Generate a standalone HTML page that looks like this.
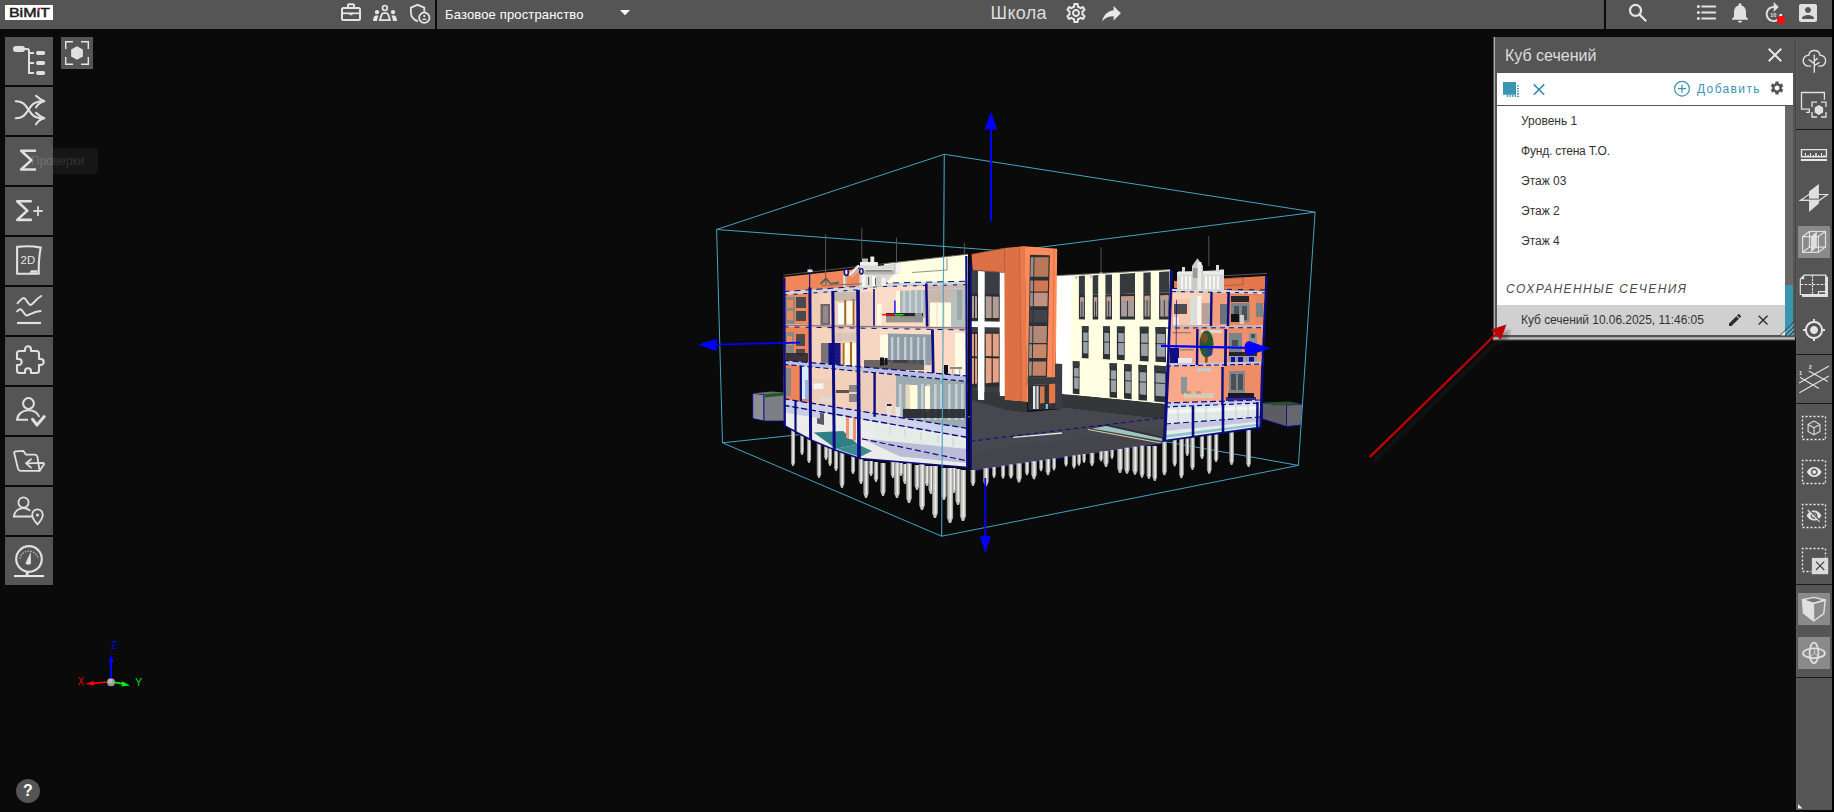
<!DOCTYPE html>
<html lang="ru">
<head>
<meta charset="utf-8">
<title>BIMIT</title>
<style>
html,body{margin:0;padding:0;}
body{width:1834px;height:812px;overflow:hidden;background:#0a0a0a;position:relative;font-family:"Liberation Sans",sans-serif;color:#ddd;}
.abs{position:absolute;}
svg{position:absolute;overflow:visible;}
#topbar{position:absolute;left:0;top:0;width:1832px;height:29px;background:#555;}
#logo{position:absolute;left:5px;top:5px;width:48px;height:15px;background:#fff;color:#111;font-weight:bold;font-size:13px;line-height:15px;text-align:center;letter-spacing:0px;}
.vdiv{position:absolute;top:0;height:29px;background:#0a0a0a;}
.t{position:absolute;white-space:nowrap;line-height:1;}
.sb{position:absolute;left:5px;width:48px;height:48px;background:#555;}
#rail{position:absolute;left:1796px;top:37px;width:36px;height:773px;background:#555;box-shadow:inset 1px 0 0 #5c5c5c;}
.rdiv{position:absolute;left:0;width:36px;height:1px;background:#1a1a1a;}
.ract{position:absolute;left:2px;width:32px;height:32px;background:#8a8a8a;}
#panel{position:absolute;left:1495px;top:37px;width:300px;height:300px;background:#555;box-shadow:-1px 0 0 0 #b4b4b4,-2px 0 0 0 #505050;}
#ptool{position:absolute;left:2px;top:36px;width:296px;height:32px;background:#fff;}
#plist{position:absolute;left:2px;top:69px;width:288px;height:229px;background:#fff;}
#pscroll{position:absolute;left:290px;top:69px;width:8px;height:229px;background:#696969;}
#pthumb{position:absolute;left:290px;top:248px;width:8px;height:50px;background:#3a95b3;}
.li{position:absolute;left:24px;font-size:12px;color:#333;white-space:nowrap;line-height:1;}
#selrow{position:absolute;left:0;top:199px;width:288px;height:30px;background:#d0d0d0;}
</style>
</head>
<body>
<!-- viewport scene placeholder -->
<svg id="scene" style="left:0;top:0" width="1834" height="812" viewBox="0 0 1834 812">
<line x1="716.6" y1="229.5" x2="1009" y2="251.3" stroke="#46a2c4" stroke-width="1"/>
<line x1="1315.1" y1="212.2" x2="1009" y2="251.3" stroke="#46a2c4" stroke-width="1"/>
<line x1="722.5" y1="442.8" x2="1005" y2="413" stroke="#46a2c4" stroke-width="1"/>
<line x1="1298.4" y1="465.4" x2="1005" y2="413" stroke="#46a2c4" stroke-width="1"/>
<line x1="1009" y1="251.3" x2="1005" y2="413" stroke="#46a2c4" stroke-width="1"/>
<polygon points="1056,276 1170,269.8 1170,404.6 1056,393.4" fill="#fffde2"/>
<polygon points="1057,276 1071.6,275.2 1070.4,395.2 1055.4,394.4" fill="#ffffff"/>
<line x1="1057" y1="275.6" x2="1170" y2="269.6" stroke="#8a8a8a" stroke-width="0.8"/>
<rect x="1075" y="276" width="2.5" height="3" fill="#c8c8c8"/>
<rect x="1081" y="275.6" width="3.5" height="3" fill="#c8c8c8"/>
<rect x="1090" y="275.2" width="2" height="3" fill="#c8c8c8"/>
<rect x="1096" y="274.8" width="2.5" height="3" fill="#c8c8c8"/>
<polygon points="1078.9,276.1 1084.9,275.8 1084.9,295 1078.9,295.1" fill="#363a3e"/>
<polygon points="1078.9,295.1 1084.9,295 1084.9,319.4 1078.9,319.3" fill="#2c2f33"/>
<polygon points="1080.1,298.2 1083.9,298.1 1083.9,316.6 1080.1,316.7" fill="#a89a98"/>
<polygon points="1080.1,297.3 1083.9,297.2 1083.9,301.3 1080.1,301.4" fill="#c49a88"/>
<line x1="1081.9" y1="301.8" x2="1081.9" y2="316.6" stroke="#2c2f33" stroke-width="0.9"/>
<polygon points="1092.7,275.4 1098.2,275.1 1098.2,294.6 1092.7,294.7" fill="#363a3e"/>
<polygon points="1092.7,294.7 1098.2,294.6 1098.2,319.4 1092.7,319.4" fill="#2c2f33"/>
<polygon points="1093.9,297.9 1097.2,297.8 1097.2,316.6 1093.9,316.6" fill="#a89a98"/>
<polygon points="1093.9,297 1097.2,296.9 1097.2,301 1093.9,301.1" fill="#c49a88"/>
<line x1="1095.5" y1="301.5" x2="1095.5" y2="316.6" stroke="#2c2f33" stroke-width="0.9"/>
<polygon points="1105.4,274.7 1112,274.4 1112,294.2 1105.4,294.4" fill="#363a3e"/>
<polygon points="1105.4,294.4 1112,294.2 1112,319.4 1105.4,319.4" fill="#2c2f33"/>
<polygon points="1106.6,297.6 1111,297.5 1111,316.6 1106.6,316.6" fill="#a89a98"/>
<polygon points="1106.6,296.6 1111,296.5 1111,300.7 1106.6,300.8" fill="#c49a88"/>
<line x1="1108.7" y1="301.2" x2="1108.7" y2="316.6" stroke="#2c2f33" stroke-width="0.9"/>
<polygon points="1119.9,273.9 1135,273.1 1135,293.5 1119.9,293.9" fill="#363a3e"/>
<polygon points="1119.9,293.9 1135,293.5 1135,319.4 1119.9,319.4" fill="#2c2f33"/>
<polygon points="1121.1,297.2 1134,296.9 1134,316.6 1121.1,316.6" fill="#a89a98"/>
<polygon points="1121.1,296.3 1134,295.9 1134,300.3 1121.1,300.5" fill="#c49a88"/>
<line x1="1127.5" y1="300.9" x2="1127.5" y2="316.6" stroke="#2c2f33" stroke-width="0.9"/>
<polygon points="1143.4,272.7 1150.7,272.3 1150.7,293.1 1143.4,293.3" fill="#363a3e"/>
<polygon points="1143.4,293.3 1150.7,293.1 1150.7,319.5 1143.4,319.5" fill="#2c2f33"/>
<polygon points="1144.6,296.6 1149.7,296.5 1149.7,316.5 1144.6,316.5" fill="#a89a98"/>
<polygon points="1144.6,295.7 1149.7,295.5 1149.7,299.9 1144.6,300" fill="#c49a88"/>
<line x1="1147.1" y1="300.5" x2="1147.1" y2="316.5" stroke="#2c2f33" stroke-width="0.9"/>
<polygon points="1159.1,271.9 1169.5,271.3 1169.5,292.5 1159.1,292.8" fill="#363a3e"/>
<polygon points="1159.1,292.8 1169.5,292.5 1169.5,319.5 1159.1,319.5" fill="#2c2f33"/>
<polygon points="1160.3,296.2 1168.5,296 1168.5,316.5 1160.3,316.5" fill="#a89a98"/>
<polygon points="1160.3,295.3 1168.5,295 1168.5,299.5 1160.3,299.7" fill="#c49a88"/>
<line x1="1164.3" y1="300.1" x2="1164.3" y2="316.5" stroke="#2c2f33" stroke-width="0.9"/>
<polygon points="1081.9,326.1 1088.5,326.2 1088.5,358.4 1081.9,358.1" fill="#2c2f33"/>
<polygon points="1083.2,332.4 1087.7,332.5 1087.7,353.4 1083.2,353.2" fill="#9aa2a6"/>
<polygon points="1081.9,326.1 1088.5,326.2 1088.5,330.7 1081.9,330.6" fill="#363a3e"/>
<line x1="1081.9" y1="341.4" x2="1088.5" y2="341.6" stroke="#2c2f33" stroke-width="1"/>
<polygon points="1103,326.3 1110,326.4 1110,359.5 1103,359.1" fill="#2c2f33"/>
<polygon points="1104.3,332.8 1109.2,332.9 1109.2,354.3 1104.3,354.1" fill="#9aa2a6"/>
<polygon points="1103,326.3 1110,326.4 1110,331.1 1103,330.9" fill="#363a3e"/>
<line x1="1103" y1="342" x2="1110" y2="342.2" stroke="#2c2f33" stroke-width="1"/>
<polygon points="1116.9,326.5 1124.7,326.5 1124.7,360.2 1116.9,359.8" fill="#2c2f33"/>
<polygon points="1118.2,333.1 1123.9,333.2 1123.9,355 1118.2,354.7" fill="#9aa2a6"/>
<polygon points="1116.9,326.5 1124.7,326.5 1124.7,331.3 1116.9,331.2" fill="#363a3e"/>
<line x1="1116.9" y1="342.4" x2="1124.7" y2="342.7" stroke="#2c2f33" stroke-width="1"/>
<polygon points="1139.8,326.7 1148.6,326.8 1148.6,361.4 1139.8,361" fill="#2c2f33"/>
<polygon points="1141.1,333.5 1147.8,333.6 1147.8,356 1141.1,355.7" fill="#9aa2a6"/>
<polygon points="1139.8,326.7 1148.6,326.8 1148.6,331.7 1139.8,331.5" fill="#363a3e"/>
<line x1="1139.8" y1="343.1" x2="1148.6" y2="343.4" stroke="#2c2f33" stroke-width="1"/>
<polygon points="1155.5,326.9 1166,327 1166,362.3 1155.5,361.8" fill="#2c2f33"/>
<polygon points="1156.8,333.8 1165.2,333.9 1165.2,356.8 1156.8,356.4" fill="#9aa2a6"/>
<polygon points="1155.5,326.9 1166,327 1166,331.9 1155.5,331.8" fill="#363a3e"/>
<line x1="1155.5" y1="343.6" x2="1166" y2="343.9" stroke="#2c2f33" stroke-width="1"/>
<polygon points="1072.8,361.2 1079.5,361.5 1079.5,394.3 1072.8,393.7" fill="#2c2f33"/>
<polygon points="1074.1,367.9 1078.7,368.2 1078.7,388.9 1074.1,388.4" fill="#9aa2a6"/>
<polygon points="1072.8,361.2 1079.5,361.5 1079.5,366.5 1072.8,366.1" fill="#363a3e"/>
<line x1="1072.8" y1="376.8" x2="1079.5" y2="377.3" stroke="#2c2f33" stroke-width="1"/>
<polygon points="1109.6,363.2 1117,363.6 1117,397.9 1109.6,397.2" fill="#2c2f33"/>
<polygon points="1110.9,370.3 1116.2,370.6 1116.2,392.2 1110.9,391.7" fill="#9aa2a6"/>
<polygon points="1109.6,363.2 1117,363.6 1117,368.8 1109.6,368.3" fill="#363a3e"/>
<line x1="1109.6" y1="379.5" x2="1117" y2="380" stroke="#2c2f33" stroke-width="1"/>
<polygon points="1124,364 1131.6,364.4 1131.6,399.3 1124,398.6" fill="#2c2f33"/>
<polygon points="1125.3,371.2 1130.8,371.5 1130.8,393.5 1125.3,393" fill="#9aa2a6"/>
<polygon points="1124,364 1131.6,364.4 1131.6,369.7 1124,369.2" fill="#363a3e"/>
<line x1="1124" y1="380.6" x2="1131.6" y2="381.1" stroke="#2c2f33" stroke-width="1"/>
<polygon points="1138.5,364.8 1147,365.2 1147,400.8 1138.5,400" fill="#2c2f33"/>
<polygon points="1139.8,372.1 1146.2,372.5 1146.2,394.9 1139.8,394.3" fill="#9aa2a6"/>
<polygon points="1138.5,364.8 1147,365.2 1147,370.6 1138.5,370.1" fill="#363a3e"/>
<line x1="1138.5" y1="381.7" x2="1147" y2="382.3" stroke="#2c2f33" stroke-width="1"/>
<polygon points="1154.3,365.6 1166,366.3 1166,402.6 1154.3,401.5" fill="#2c2f33"/>
<polygon points="1155.6,373.1 1165.2,373.7 1165.2,396.6 1155.6,395.7" fill="#9aa2a6"/>
<polygon points="1154.3,365.6 1166,366.3 1166,371.8 1154.3,371" fill="#363a3e"/>
<line x1="1154.3" y1="382.8" x2="1166" y2="383.7" stroke="#2c2f33" stroke-width="1"/>
<polygon points="1062,394 1170,404.6 1170,419.5 1062,407.1" fill="#33373a"/>
<polygon points="970,270 1005,272 1005,401 970,399" fill="#3a3e44"/>
<polygon points="971,293.5 978,293.7 978,320.5 971,320.5" fill="#2a2c30"/>
<polygon points="972,296 977,296.2 977,318 972,318" fill="#b39c94"/>
<line x1="974.5" y1="296" x2="974.5" y2="318" stroke="#2a2c30" stroke-width="1"/>
<polygon points="971,332 978,331.9 978,387.6 971,388" fill="#2a2c30"/>
<polygon points="972,334 977,333.9 977,383.6 972,384" fill="#e6a384"/>
<line x1="974.5" y1="334" x2="974.5" y2="385" stroke="#2a2c30" stroke-width="1.2"/>
<line x1="971" y1="357" x2="978" y2="357.5" stroke="#2a2c30" stroke-width="2.2"/>
<polygon points="984.7,293.9 999.8,294.3 999.8,320.5 984.7,320.5" fill="#2a2c30"/>
<polygon points="985.7,296.3 998.8,296.7 998.8,318.1 985.7,318.1" fill="#b39c94"/>
<line x1="992.2" y1="296" x2="992.2" y2="318" stroke="#2a2c30" stroke-width="1"/>
<polygon points="984.7,331.9 999.8,331.7 999.8,386.2 984.7,387.1" fill="#2a2c30"/>
<polygon points="985.7,333.8 998.8,333.7 998.8,382.3 985.7,383.2" fill="#e6a384"/>
<line x1="992.2" y1="334" x2="992.2" y2="385" stroke="#2a2c30" stroke-width="1.2"/>
<line x1="984.7" y1="357" x2="999.8" y2="357.5" stroke="#2a2c30" stroke-width="2.2"/>
<polygon points="978.1,271 984.7,271.3 984.4,401 977.8,400.6" fill="#ffffff"/>
<polygon points="999.8,272 1005,272.2 1005,396 999.6,396" fill="#ffffff"/>
<polygon points="971,321.2 1005,321.8 1005,327.6 971,327" fill="#ffffff"/>
<polygon points="970,390 978,390.4 978,400.8 970,400" fill="#33373a"/>
<polygon points="984.5,392 999.8,392.6 999.8,402 984.5,401" fill="#33373a"/>
<polygon points="970,399.5 1005.5,401 1005.5,410 970,401.5" fill="#33373a"/>
<polygon points="971.5,254.2 1004.3,248.1 1004.6,272.6 972.6,270" fill="#dd7044"/>
<line x1="972" y1="254.2" x2="1004" y2="248.3" stroke="#7a4a38" stroke-width="0.7"/>
<line x1="973" y1="270" x2="1004.6" y2="272.6" stroke="#8a5a48" stroke-width="0.7"/>
<polygon points="1004.3,248 1024.6,246.3 1027,402 1004.8,400.2" fill="#de7144"/>
<polygon points="1019.5,246.8 1024.6,246.3 1027,402 1021.5,401.5" fill="#e97a4b"/>
<line x1="1019.5" y1="246.8" x2="1021.5" y2="401.5" stroke="#a85a38" stroke-width="0.6"/>
<polygon points="1024.6,246.3 1057.2,248.7 1055.3,403 1027,402" fill="#ff8b5b"/>
<line x1="1054" y1="249" x2="1052.3" y2="403" stroke="#c8683f" stroke-width="0.7"/>
<polygon points="1030,254.7 1049.9,255.2 1046.9,377.5 1028,377.5" fill="#2e3036"/>
<polygon points="1034.6,257.2 1048.6,257.2 1048.2,276.8 1034.2,276.8" fill="#b8785c"/>
<polygon points="1030.8,257.2 1033.6,257.2 1033.2,276.8 1030.4,276.8" fill="#9a8f8a"/>
<polygon points="1034.2,280.5 1048.1,280.5 1047.8,291.5 1034,291.5" fill="#d07850"/>
<polygon points="1030.4,280.5 1033.2,280.5 1033,291.5 1030.2,291.5" fill="#9a8f8a"/>
<polygon points="1034,292.8 1047.8,292.8 1047.4,306.3 1033.8,306.3" fill="#c3917f"/>
<polygon points="1030.2,292.8 1033,292.8 1032.8,306.3 1030,306.3" fill="#9a8f8a"/>
<polygon points="1033.7,310 1047.4,310 1047,322.2 1033.5,322.2" fill="#40434b"/>
<polygon points="1029.9,310 1032.7,310 1032.5,322.2 1029.7,322.2" fill="#40434b"/>
<polygon points="1033.4,325.9 1047,325.9 1046.5,343.1 1033.2,343.1" fill="#b28878"/>
<polygon points="1029.6,325.9 1032.4,325.9 1032.2,343.1 1029.4,343.1" fill="#9a8f8a"/>
<polygon points="1033.1,344.3 1046.5,344.3 1046.2,357.9 1032.9,357.9" fill="#c98868"/>
<polygon points="1029.3,344.3 1032.1,344.3 1031.9,357.9 1029.1,357.9" fill="#9a8f8a"/>
<polygon points="1032.9,361.5 1046.1,361.5 1045.7,375.7 1032.6,375.7" fill="#c08468"/>
<polygon points="1029.1,361.5 1031.9,361.5 1031.6,375.7 1028.8,375.7" fill="#9a8f8a"/>
<polygon points="1055,363.5 1062.2,364 1062,409 1055,409" fill="#3a3d43"/>
<polygon points="1027.6,377.3 1060.2,377.3 1060.2,383.5 1027.6,385.2" fill="#383c40"/>
<polygon points="1028,385.2 1055.2,383.8 1055.2,409 1028,410.5" fill="#2f3236"/>
<rect x="1033" y="386" width="2.4" height="23" fill="#e8e8e8"/>
<rect x="1036.4" y="386" width="2.2" height="23" fill="#d0d0d0"/>
<polygon points="1040,386.5 1044.5,386.3 1044.5,403 1040,403.5" fill="#d07a52"/>
<rect x="1045.8" y="404" width="2" height="5" fill="#8fd0d8"/>
<polygon points="1004.8,400.2 1027,402 1027.4,412 1005,409.6" fill="#33373a"/>
<polygon points="1049,384 1055.2,383.8 1055.2,403 1049,403.5" fill="#e27648"/>
<polygon points="970,399.5 1005,409.6 1027.4,412 1062,409 1062,407.1 1166,419 1164,443.5 970,471.5" fill="#47474f"/>
<polygon points="970,452 1164,428 1164,443.5 970,471.5" fill="#44444c"/>
<polygon points="1091,428 1108,424.6 1163,437 1163,441.5" fill="#2e3034"/>
<polygon points="1092,428.5 1106,426 1162,438.6 1162,441" fill="#9cc4c4"/>
<line x1="1088" y1="429.5" x2="1161" y2="443" stroke="#d8cc9a" stroke-width="1.2"/>
<line x1="1013" y1="437.3" x2="1062" y2="433" stroke="#e4e4e4" stroke-width="1.3"/>
<line x1="970" y1="441.3" x2="1163" y2="417.8" stroke="#0c0c82" stroke-width="1" stroke-dasharray="5 3"/>
<line x1="970" y1="471.5" x2="1164" y2="443.5" stroke="#0c0c82" stroke-width="1.2"/>
<polygon points="800.2,425 803.8,425 803.8,451.7 802.7,455 801.3,455 800.2,451.7" fill="#c4c4be"/>
<line x1="800.5" y1="425" x2="800.5" y2="451.7" stroke="#77777a" stroke-width="0.8"/>
<line x1="803.5" y1="425" x2="803.5" y2="451.7" stroke="#8e8e90" stroke-width="0.7"/>
<line x1="802.3" y1="425" x2="802.3" y2="452.4" stroke="#ecece8" stroke-width="1.1"/>
<polygon points="824.1,443 827.9,443 827.9,456.5 826.7,460 825.3,460 824.1,456.5" fill="#c4c4be"/>
<line x1="824.4" y1="443" x2="824.4" y2="456.5" stroke="#77777a" stroke-width="0.8"/>
<line x1="827.6" y1="443" x2="827.6" y2="456.5" stroke="#8e8e90" stroke-width="0.7"/>
<line x1="826.3" y1="443" x2="826.3" y2="457.3" stroke="#ecece8" stroke-width="1.2"/>
<polygon points="807,427 811,427 811,459.4 809.7,463 808.3,463 807,459.4" fill="#c4c4be"/>
<line x1="807.4" y1="427" x2="807.4" y2="459.4" stroke="#77777a" stroke-width="0.8"/>
<line x1="810.6" y1="427" x2="810.6" y2="459.4" stroke="#8e8e90" stroke-width="0.7"/>
<line x1="809.3" y1="427" x2="809.3" y2="460.2" stroke="#ecece8" stroke-width="1.2"/>
<polygon points="791,424 795,424 795,462.4 793.7,466 792.3,466 791,462.4" fill="#c4c4be"/>
<line x1="791.4" y1="424" x2="791.4" y2="462.4" stroke="#77777a" stroke-width="0.8"/>
<line x1="794.6" y1="424" x2="794.6" y2="462.4" stroke="#8e8e90" stroke-width="0.7"/>
<line x1="793.3" y1="424" x2="793.3" y2="463.2" stroke="#ecece8" stroke-width="1.2"/>
<polygon points="828.1,447 831.9,447 831.9,462.5 830.7,466 829.3,466 828.1,462.5" fill="#c4c4be"/>
<line x1="828.4" y1="447" x2="828.4" y2="462.5" stroke="#77777a" stroke-width="0.8"/>
<line x1="831.6" y1="447" x2="831.6" y2="462.5" stroke="#8e8e90" stroke-width="0.7"/>
<line x1="830.3" y1="447" x2="830.3" y2="463.3" stroke="#ecece8" stroke-width="1.2"/>
<polygon points="834,450 838,450 838,467.4 836.7,471 835.3,471 834,467.4" fill="#c4c4be"/>
<line x1="834.4" y1="450" x2="834.4" y2="467.4" stroke="#77777a" stroke-width="0.8"/>
<line x1="837.6" y1="450" x2="837.6" y2="467.4" stroke="#8e8e90" stroke-width="0.7"/>
<line x1="836.3" y1="450" x2="836.3" y2="468.2" stroke="#ecece8" stroke-width="1.2"/>
<polygon points="851,456 855,456 855,470.4 853.7,474 852.3,474 851,470.4" fill="#c4c4be"/>
<line x1="851.4" y1="456" x2="851.4" y2="470.4" stroke="#77777a" stroke-width="0.8"/>
<line x1="854.6" y1="456" x2="854.6" y2="470.4" stroke="#8e8e90" stroke-width="0.7"/>
<line x1="853.3" y1="456" x2="853.3" y2="471.2" stroke="#ecece8" stroke-width="1.2"/>
<polygon points="869,461 873,461 873,472.4 871.7,476 870.3,476 869,472.4" fill="#c4c4be"/>
<line x1="869.4" y1="461" x2="869.4" y2="472.4" stroke="#77777a" stroke-width="0.8"/>
<line x1="872.6" y1="461" x2="872.6" y2="472.4" stroke="#8e8e90" stroke-width="0.7"/>
<line x1="871.3" y1="461" x2="871.3" y2="473.2" stroke="#ecece8" stroke-width="1.2"/>
<polygon points="899,463 903,463 903,472.4 901.7,476 900.3,476 899,472.4" fill="#c4c4be"/>
<line x1="899.4" y1="463" x2="899.4" y2="472.4" stroke="#77777a" stroke-width="0.8"/>
<line x1="902.6" y1="463" x2="902.6" y2="472.4" stroke="#8e8e90" stroke-width="0.7"/>
<line x1="901.3" y1="463" x2="901.3" y2="473.2" stroke="#ecece8" stroke-width="1.2"/>
<polygon points="816.9,442 821.1,442 821.1,474.3 819.7,478 818.3,478 816.9,474.3" fill="#c4c4be"/>
<line x1="817.3" y1="442" x2="817.3" y2="474.3" stroke="#77777a" stroke-width="0.8"/>
<line x1="820.7" y1="442" x2="820.7" y2="474.3" stroke="#8e8e90" stroke-width="0.7"/>
<line x1="819.3" y1="442" x2="819.3" y2="475.1" stroke="#ecece8" stroke-width="1.2"/>
<polygon points="890.8,458 895.2,458 895.2,474.1 893.8,478 892.2,478 890.8,474.1" fill="#c4c4be"/>
<line x1="891.2" y1="458" x2="891.2" y2="474.1" stroke="#77777a" stroke-width="0.8"/>
<line x1="894.8" y1="458" x2="894.8" y2="474.1" stroke="#8e8e90" stroke-width="0.7"/>
<line x1="893.3" y1="458" x2="893.3" y2="475" stroke="#ecece8" stroke-width="1.3"/>
<polygon points="873.9,462 878.1,462 878.1,478.3 876.7,482 875.3,482 873.9,478.3" fill="#c4c4be"/>
<line x1="874.3" y1="462" x2="874.3" y2="478.3" stroke="#77777a" stroke-width="0.8"/>
<line x1="877.7" y1="462" x2="877.7" y2="478.3" stroke="#8e8e90" stroke-width="0.7"/>
<line x1="876.3" y1="462" x2="876.3" y2="479.1" stroke="#ecece8" stroke-width="1.2"/>
<polygon points="858.8,459 863.2,459 863.2,480.1 861.8,484 860.2,484 858.8,480.1" fill="#c4c4be"/>
<line x1="859.2" y1="459" x2="859.2" y2="480.1" stroke="#77777a" stroke-width="0.8"/>
<line x1="862.8" y1="459" x2="862.8" y2="480.1" stroke="#8e8e90" stroke-width="0.7"/>
<line x1="861.3" y1="459" x2="861.3" y2="481" stroke="#ecece8" stroke-width="1.3"/>
<polygon points="902.8,464 907.2,464 907.2,480.1 905.8,484 904.2,484 902.8,480.1" fill="#c4c4be"/>
<line x1="903.2" y1="464" x2="903.2" y2="480.1" stroke="#77777a" stroke-width="0.8"/>
<line x1="906.8" y1="464" x2="906.8" y2="480.1" stroke="#8e8e90" stroke-width="0.7"/>
<line x1="905.3" y1="464" x2="905.3" y2="481" stroke="#ecece8" stroke-width="1.3"/>
<polygon points="924.8,466 929.2,466 929.2,482.1 927.8,486 926.2,486 924.8,482.1" fill="#c4c4be"/>
<line x1="925.2" y1="466" x2="925.2" y2="482.1" stroke="#77777a" stroke-width="0.8"/>
<line x1="928.8" y1="466" x2="928.8" y2="482.1" stroke="#8e8e90" stroke-width="0.7"/>
<line x1="927.3" y1="466" x2="927.3" y2="483" stroke="#ecece8" stroke-width="1.3"/>
<polygon points="839.8,451 844.2,451 844.2,484 842.8,488 841.2,488 839.8,484" fill="#c4c4be"/>
<line x1="840.1" y1="451" x2="840.1" y2="484" stroke="#77777a" stroke-width="0.8"/>
<line x1="843.9" y1="451" x2="843.9" y2="484" stroke="#8e8e90" stroke-width="0.7"/>
<line x1="842.4" y1="451" x2="842.4" y2="484.9" stroke="#ecece8" stroke-width="1.3"/>
<polygon points="914.7,465 919.3,465 919.3,485.8 917.8,490 916.2,490 914.7,485.8" fill="#c4c4be"/>
<line x1="915" y1="465" x2="915" y2="485.8" stroke="#77777a" stroke-width="0.8"/>
<line x1="919" y1="465" x2="919" y2="485.8" stroke="#8e8e90" stroke-width="0.7"/>
<line x1="917.4" y1="465" x2="917.4" y2="486.8" stroke="#ecece8" stroke-width="1.4"/>
<polygon points="951.8,468 956.2,468 956.2,489 954.8,493 953.2,493 951.8,489" fill="#c4c4be"/>
<line x1="952.1" y1="468" x2="952.1" y2="489" stroke="#77777a" stroke-width="0.8"/>
<line x1="955.9" y1="468" x2="955.9" y2="489" stroke="#8e8e90" stroke-width="0.7"/>
<line x1="954.4" y1="468" x2="954.4" y2="489.9" stroke="#ecece8" stroke-width="1.3"/>
<polygon points="928.6,466 933.4,466 933.4,489.7 931.9,494 930.1,494 928.6,489.7" fill="#c4c4be"/>
<line x1="929" y1="466" x2="929" y2="489.7" stroke="#77777a" stroke-width="0.8"/>
<line x1="933" y1="466" x2="933" y2="489.7" stroke="#8e8e90" stroke-width="0.7"/>
<line x1="931.4" y1="466" x2="931.4" y2="490.6" stroke="#ecece8" stroke-width="1.4"/>
<polygon points="880.6,463 885.4,463 885.4,491.7 883.9,496 882.1,496 880.6,491.7" fill="#c4c4be"/>
<line x1="881" y1="463" x2="881" y2="491.7" stroke="#77777a" stroke-width="0.8"/>
<line x1="885" y1="463" x2="885" y2="491.7" stroke="#8e8e90" stroke-width="0.7"/>
<line x1="883.4" y1="463" x2="883.4" y2="492.6" stroke="#ecece8" stroke-width="1.4"/>
<polygon points="863.6,461 868.4,461 868.4,493.7 866.9,498 865.1,498 863.6,493.7" fill="#c4c4be"/>
<line x1="864" y1="461" x2="864" y2="493.7" stroke="#77777a" stroke-width="0.8"/>
<line x1="868" y1="461" x2="868" y2="493.7" stroke="#8e8e90" stroke-width="0.7"/>
<line x1="866.4" y1="461" x2="866.4" y2="494.6" stroke="#ecece8" stroke-width="1.4"/>
<polygon points="894.4,452 899.6,452 899.6,493.4 897.9,498 896.1,498 894.4,493.4" fill="#c4c4be"/>
<line x1="894.8" y1="452" x2="894.8" y2="493.4" stroke="#77777a" stroke-width="0.8"/>
<line x1="899.2" y1="452" x2="899.2" y2="493.4" stroke="#8e8e90" stroke-width="0.7"/>
<line x1="897.4" y1="452" x2="897.4" y2="494.4" stroke="#ecece8" stroke-width="1.5"/>
<polygon points="941.6,468 946.4,468 946.4,495.7 944.9,500 943.1,500 941.6,495.7" fill="#c4c4be"/>
<line x1="942" y1="468" x2="942" y2="495.7" stroke="#77777a" stroke-width="0.8"/>
<line x1="946" y1="468" x2="946" y2="495.7" stroke="#8e8e90" stroke-width="0.7"/>
<line x1="944.4" y1="468" x2="944.4" y2="496.6" stroke="#ecece8" stroke-width="1.4"/>
<polygon points="906.4,461 911.6,461 911.6,498.2 910,503 908,503 906.4,498.2" fill="#c4c4be"/>
<line x1="906.7" y1="461" x2="906.7" y2="498.2" stroke="#77777a" stroke-width="0.8"/>
<line x1="911.3" y1="461" x2="911.3" y2="498.2" stroke="#8e8e90" stroke-width="0.7"/>
<line x1="909.4" y1="461" x2="909.4" y2="499.3" stroke="#ecece8" stroke-width="1.6"/>
<polygon points="955.5,469 960.5,469 960.5,500.5 958.9,505 957.1,505 955.5,500.5" fill="#c4c4be"/>
<line x1="955.9" y1="469" x2="955.9" y2="500.5" stroke="#77777a" stroke-width="0.8"/>
<line x1="960.1" y1="469" x2="960.1" y2="500.5" stroke="#8e8e90" stroke-width="0.7"/>
<line x1="958.4" y1="469" x2="958.4" y2="501.5" stroke="#ecece8" stroke-width="1.5"/>
<polygon points="919.2,464 924.8,464 924.8,505 923,510 921,510 919.2,505" fill="#c4c4be"/>
<line x1="919.6" y1="464" x2="919.6" y2="505" stroke="#77777a" stroke-width="0.8"/>
<line x1="924.4" y1="464" x2="924.4" y2="505" stroke="#8e8e90" stroke-width="0.7"/>
<line x1="922.4" y1="464" x2="922.4" y2="506.1" stroke="#ecece8" stroke-width="1.7"/>
<polygon points="932.1,466 937.9,466 937.9,512.8 936,518 934,518 932.1,512.8" fill="#c4c4be"/>
<line x1="932.5" y1="466" x2="932.5" y2="512.8" stroke="#77777a" stroke-width="0.8"/>
<line x1="937.5" y1="466" x2="937.5" y2="512.8" stroke="#8e8e90" stroke-width="0.7"/>
<line x1="935.5" y1="466" x2="935.5" y2="514" stroke="#ecece8" stroke-width="1.7"/>
<polygon points="960,470 966,470 966,515.7 964.1,521 961.9,521 960,515.7" fill="#c4c4be"/>
<line x1="960.4" y1="470" x2="960.4" y2="515.7" stroke="#77777a" stroke-width="0.8"/>
<line x1="965.6" y1="470" x2="965.6" y2="515.7" stroke="#8e8e90" stroke-width="0.7"/>
<line x1="963.5" y1="470" x2="963.5" y2="516.9" stroke="#ecece8" stroke-width="1.8"/>
<polygon points="947,468 953,468 953,517.5 951.1,523 948.9,523 947,517.5" fill="#c4c4be"/>
<line x1="947.3" y1="468" x2="947.3" y2="517.5" stroke="#77777a" stroke-width="0.8"/>
<line x1="952.7" y1="468" x2="952.7" y2="517.5" stroke="#8e8e90" stroke-width="0.7"/>
<line x1="950.5" y1="468" x2="950.5" y2="518.7" stroke="#ecece8" stroke-width="1.8"/>
<polygon points="970.8,470.1 975.2,470.1 975.2,482.1 973.8,486.1 972.2,486.1 970.8,482.1" fill="#c4c4be"/>
<line x1="971.1" y1="470.1" x2="971.1" y2="482.1" stroke="#77777a" stroke-width="0.8"/>
<line x1="974.9" y1="470.1" x2="974.9" y2="482.1" stroke="#8e8e90" stroke-width="0.7"/>
<line x1="973.4" y1="470.1" x2="973.4" y2="483" stroke="#ecece8" stroke-width="1.3"/>
<polygon points="983.4,468.2 988.6,468.2 988.6,481.5 986.9,486.2 985.1,486.2 983.4,481.5" fill="#c4c4be"/>
<line x1="983.8" y1="468.2" x2="983.8" y2="481.5" stroke="#77777a" stroke-width="0.8"/>
<line x1="988.2" y1="468.2" x2="988.2" y2="481.5" stroke="#8e8e90" stroke-width="0.7"/>
<line x1="986.4" y1="468.2" x2="986.4" y2="482.6" stroke="#ecece8" stroke-width="1.6"/>
<polygon points="992.2,467 995.8,467 995.8,474.8 994.6,478 993.4,478 992.2,474.8" fill="#c4c4be"/>
<line x1="992.6" y1="467" x2="992.6" y2="474.8" stroke="#77777a" stroke-width="0.8"/>
<line x1="995.4" y1="467" x2="995.4" y2="474.8" stroke="#8e8e90" stroke-width="0.7"/>
<line x1="994.3" y1="467" x2="994.3" y2="475.5" stroke="#ecece8" stroke-width="1.1"/>
<polygon points="1001,465.7 1005,465.7 1005,475.1 1003.7,478.7 1002.3,478.7 1001,475.1" fill="#c4c4be"/>
<line x1="1001.4" y1="465.7" x2="1001.4" y2="475.1" stroke="#77777a" stroke-width="0.8"/>
<line x1="1004.6" y1="465.7" x2="1004.6" y2="475.1" stroke="#8e8e90" stroke-width="0.7"/>
<line x1="1003.3" y1="465.7" x2="1003.3" y2="475.9" stroke="#ecece8" stroke-width="1.2"/>
<polygon points="1008.8,464.6 1013.2,464.6 1013.2,474.7 1011.8,478.6 1010.2,478.6 1008.8,474.7" fill="#c4c4be"/>
<line x1="1009.2" y1="464.6" x2="1009.2" y2="474.7" stroke="#77777a" stroke-width="0.8"/>
<line x1="1012.8" y1="464.6" x2="1012.8" y2="474.7" stroke="#8e8e90" stroke-width="0.7"/>
<line x1="1011.3" y1="464.6" x2="1011.3" y2="475.6" stroke="#ecece8" stroke-width="1.3"/>
<polygon points="1016.4,463.4 1021.6,463.4 1021.6,477.7 1020,482.4 1018,482.4 1016.4,477.7" fill="#c4c4be"/>
<line x1="1016.7" y1="463.4" x2="1016.7" y2="477.7" stroke="#77777a" stroke-width="0.8"/>
<line x1="1021.3" y1="463.4" x2="1021.3" y2="477.7" stroke="#8e8e90" stroke-width="0.7"/>
<line x1="1019.4" y1="463.4" x2="1019.4" y2="478.7" stroke="#ecece8" stroke-width="1.6"/>
<polygon points="1025,462.3 1029,462.3 1029,471.7 1027.7,475.3 1026.3,475.3 1025,471.7" fill="#c4c4be"/>
<line x1="1025.3" y1="462.3" x2="1025.3" y2="471.7" stroke="#77777a" stroke-width="0.8"/>
<line x1="1028.7" y1="462.3" x2="1028.7" y2="471.7" stroke="#8e8e90" stroke-width="0.7"/>
<line x1="1027.3" y1="462.3" x2="1027.3" y2="472.5" stroke="#ecece8" stroke-width="1.2"/>
<polygon points="1031.4,461.3 1036.6,461.3 1036.6,474.7 1034.9,479.3 1033.1,479.3 1031.4,474.7" fill="#c4c4be"/>
<line x1="1031.8" y1="461.3" x2="1031.8" y2="474.7" stroke="#77777a" stroke-width="0.8"/>
<line x1="1036.2" y1="461.3" x2="1036.2" y2="474.7" stroke="#8e8e90" stroke-width="0.7"/>
<line x1="1034.4" y1="461.3" x2="1034.4" y2="475.7" stroke="#ecece8" stroke-width="1.5"/>
<polygon points="1039.2,460.3 1042.8,460.3 1042.8,467.9 1041.7,471.3 1040.3,471.3 1039.2,467.9" fill="#c4c4be"/>
<line x1="1039.5" y1="460.3" x2="1039.5" y2="467.9" stroke="#77777a" stroke-width="0.8"/>
<line x1="1042.5" y1="460.3" x2="1042.5" y2="467.9" stroke="#8e8e90" stroke-width="0.7"/>
<line x1="1041.3" y1="460.3" x2="1041.3" y2="468.7" stroke="#ecece8" stroke-width="1.1"/>
<polygon points="1045.8,459.2 1050.2,459.2 1050.2,471.2 1048.8,475.2 1047.2,475.2 1045.8,471.2" fill="#c4c4be"/>
<line x1="1046.1" y1="459.2" x2="1046.1" y2="471.2" stroke="#77777a" stroke-width="0.8"/>
<line x1="1049.9" y1="459.2" x2="1049.9" y2="471.2" stroke="#8e8e90" stroke-width="0.7"/>
<line x1="1048.4" y1="459.2" x2="1048.4" y2="472.1" stroke="#ecece8" stroke-width="1.3"/>
<polygon points="1052.2,458.4 1055.8,458.4 1055.8,467.1 1054.7,470.4 1053.3,470.4 1052.2,467.1" fill="#c4c4be"/>
<line x1="1052.5" y1="458.4" x2="1052.5" y2="467.1" stroke="#77777a" stroke-width="0.8"/>
<line x1="1055.5" y1="458.4" x2="1055.5" y2="467.1" stroke="#8e8e90" stroke-width="0.7"/>
<line x1="1054.3" y1="458.4" x2="1054.3" y2="467.8" stroke="#ecece8" stroke-width="1.1"/>
<polygon points="1064.2,456.6 1067.8,456.6 1067.8,463.5 1066.6,466.6 1065.4,466.6 1064.2,463.5" fill="#c4c4be"/>
<line x1="1064.6" y1="456.6" x2="1064.6" y2="463.5" stroke="#77777a" stroke-width="0.8"/>
<line x1="1067.4" y1="456.6" x2="1067.4" y2="463.5" stroke="#8e8e90" stroke-width="0.7"/>
<line x1="1066.3" y1="456.6" x2="1066.3" y2="464.2" stroke="#ecece8" stroke-width="1.1"/>
<polygon points="1072,455.5 1076,455.5 1076,464.9 1074.7,468.5 1073.3,468.5 1072,464.9" fill="#c4c4be"/>
<line x1="1072.3" y1="455.5" x2="1072.3" y2="464.9" stroke="#77777a" stroke-width="0.8"/>
<line x1="1075.7" y1="455.5" x2="1075.7" y2="464.9" stroke="#8e8e90" stroke-width="0.7"/>
<line x1="1074.3" y1="455.5" x2="1074.3" y2="465.7" stroke="#ecece8" stroke-width="1.2"/>
<polygon points="1077.2,454.8 1080.8,454.8 1080.8,462.6 1079.6,465.8 1078.4,465.8 1077.2,462.6" fill="#c4c4be"/>
<line x1="1077.6" y1="454.8" x2="1077.6" y2="462.6" stroke="#77777a" stroke-width="0.8"/>
<line x1="1080.4" y1="454.8" x2="1080.4" y2="462.6" stroke="#8e8e90" stroke-width="0.7"/>
<line x1="1079.3" y1="454.8" x2="1079.3" y2="463.3" stroke="#ecece8" stroke-width="1.1"/>
<polygon points="1082.4,454 1085.6,454 1085.6,460.2 1084.6,463 1083.4,463 1082.4,460.2" fill="#c4c4be"/>
<line x1="1082.8" y1="454" x2="1082.8" y2="460.2" stroke="#77777a" stroke-width="0.8"/>
<line x1="1085.2" y1="454" x2="1085.2" y2="460.2" stroke="#8e8e90" stroke-width="0.7"/>
<line x1="1084.3" y1="454" x2="1084.3" y2="460.8" stroke="#ecece8" stroke-width="1"/>
<polygon points="1089.8,452.9 1094.2,452.9 1094.2,462 1092.8,465.9 1091.2,465.9 1089.8,462" fill="#c4c4be"/>
<line x1="1090.2" y1="452.9" x2="1090.2" y2="462" stroke="#77777a" stroke-width="0.8"/>
<line x1="1093.8" y1="452.9" x2="1093.8" y2="462" stroke="#8e8e90" stroke-width="0.7"/>
<line x1="1092.3" y1="452.9" x2="1092.3" y2="462.9" stroke="#ecece8" stroke-width="1.3"/>
<polygon points="1099.2,451.6 1102.8,451.6 1102.8,458.4 1101.6,461.6 1100.4,461.6 1099.2,458.4" fill="#c4c4be"/>
<line x1="1099.6" y1="451.6" x2="1099.6" y2="458.4" stroke="#77777a" stroke-width="0.8"/>
<line x1="1102.4" y1="451.6" x2="1102.4" y2="458.4" stroke="#8e8e90" stroke-width="0.7"/>
<line x1="1101.3" y1="451.6" x2="1101.3" y2="459.1" stroke="#ecece8" stroke-width="1.1"/>
<polygon points="1103.6,450.9 1108.4,450.9 1108.4,462.6 1106.9,466.9 1105.1,466.9 1103.6,462.6" fill="#c4c4be"/>
<line x1="1103.9" y1="450.9" x2="1103.9" y2="462.6" stroke="#77777a" stroke-width="0.8"/>
<line x1="1108.1" y1="450.9" x2="1108.1" y2="462.6" stroke="#8e8e90" stroke-width="0.7"/>
<line x1="1106.4" y1="450.9" x2="1106.4" y2="463.5" stroke="#ecece8" stroke-width="1.4"/>
<polygon points="1110.4,450 1113.6,450 1113.6,456.1 1112.6,459 1111.4,459 1110.4,456.1" fill="#c4c4be"/>
<line x1="1110.8" y1="450" x2="1110.8" y2="456.1" stroke="#77777a" stroke-width="0.8"/>
<line x1="1113.2" y1="450" x2="1113.2" y2="456.1" stroke="#8e8e90" stroke-width="0.7"/>
<line x1="1112.3" y1="450" x2="1112.3" y2="456.8" stroke="#ecece8" stroke-width="1"/>
<polygon points="1117.4,448.9 1122.6,448.9 1122.6,468.1 1121,472.9 1119,472.9 1117.4,468.1" fill="#c4c4be"/>
<line x1="1117.7" y1="448.9" x2="1117.7" y2="468.1" stroke="#77777a" stroke-width="0.8"/>
<line x1="1122.3" y1="448.9" x2="1122.3" y2="468.1" stroke="#8e8e90" stroke-width="0.7"/>
<line x1="1120.4" y1="448.9" x2="1120.4" y2="469.2" stroke="#ecece8" stroke-width="1.6"/>
<polygon points="1124.5,447.8 1129.5,447.8 1129.5,469.4 1127.9,473.8 1126.1,473.8 1124.5,469.4" fill="#c4c4be"/>
<line x1="1124.9" y1="447.8" x2="1124.9" y2="469.4" stroke="#77777a" stroke-width="0.8"/>
<line x1="1129.1" y1="447.8" x2="1129.1" y2="469.4" stroke="#8e8e90" stroke-width="0.7"/>
<line x1="1127.4" y1="447.8" x2="1127.4" y2="470.4" stroke="#ecece8" stroke-width="1.5"/>
<polygon points="1132.5,446.7 1137.5,446.7 1137.5,470.2 1135.9,474.7 1134.1,474.7 1132.5,470.2" fill="#c4c4be"/>
<line x1="1132.9" y1="446.7" x2="1132.9" y2="470.2" stroke="#77777a" stroke-width="0.8"/>
<line x1="1137.1" y1="446.7" x2="1137.1" y2="470.2" stroke="#8e8e90" stroke-width="0.7"/>
<line x1="1135.4" y1="446.7" x2="1135.4" y2="471.2" stroke="#ecece8" stroke-width="1.5"/>
<polygon points="1139.8,445.7 1144.2,445.7 1144.2,473.6 1142.8,477.7 1141.2,477.7 1139.8,473.6" fill="#c4c4be"/>
<line x1="1140.1" y1="445.7" x2="1140.1" y2="473.6" stroke="#77777a" stroke-width="0.8"/>
<line x1="1143.9" y1="445.7" x2="1143.9" y2="473.6" stroke="#8e8e90" stroke-width="0.7"/>
<line x1="1142.4" y1="445.7" x2="1142.4" y2="474.5" stroke="#ecece8" stroke-width="1.3"/>
<polygon points="1185.5,436 1189.1,436 1189.1,452.7 1188,456 1186.6,456 1185.5,452.7" fill="#c4c4be"/>
<line x1="1185.8" y1="436" x2="1185.8" y2="452.7" stroke="#77777a" stroke-width="0.8"/>
<line x1="1188.8" y1="436" x2="1188.8" y2="452.7" stroke="#8e8e90" stroke-width="0.7"/>
<line x1="1187.6" y1="436" x2="1187.6" y2="453.4" stroke="#ecece8" stroke-width="1.1"/>
<polygon points="1200,432 1204,432 1204,455.4 1202.7,459 1201.3,459 1200,455.4" fill="#c4c4be"/>
<line x1="1200.3" y1="432" x2="1200.3" y2="455.4" stroke="#77777a" stroke-width="0.8"/>
<line x1="1203.7" y1="432" x2="1203.7" y2="455.4" stroke="#8e8e90" stroke-width="0.7"/>
<line x1="1202.3" y1="432" x2="1202.3" y2="456.2" stroke="#ecece8" stroke-width="1.2"/>
<polygon points="1214.1,431 1218.1,431 1218.1,458.4 1216.8,462 1215.4,462 1214.1,458.4" fill="#c4c4be"/>
<line x1="1214.4" y1="431" x2="1214.4" y2="458.4" stroke="#77777a" stroke-width="0.8"/>
<line x1="1217.8" y1="431" x2="1217.8" y2="458.4" stroke="#8e8e90" stroke-width="0.7"/>
<line x1="1216.4" y1="431" x2="1216.4" y2="459.2" stroke="#ecece8" stroke-width="1.2"/>
<polygon points="1229.4,429 1233.8,429 1233.8,461.1 1232.4,465 1230.8,465 1229.4,461.1" fill="#c4c4be"/>
<line x1="1229.8" y1="429" x2="1229.8" y2="461.1" stroke="#77777a" stroke-width="0.8"/>
<line x1="1233.4" y1="429" x2="1233.4" y2="461.1" stroke="#8e8e90" stroke-width="0.7"/>
<line x1="1231.9" y1="429" x2="1231.9" y2="462" stroke="#ecece8" stroke-width="1.3"/>
<polygon points="1172.7,437 1176.7,437 1176.7,462.8 1175.4,466.4 1174,466.4 1172.7,462.8" fill="#c4c4be"/>
<line x1="1173" y1="437" x2="1173" y2="462.8" stroke="#77777a" stroke-width="0.8"/>
<line x1="1176.4" y1="437" x2="1176.4" y2="462.8" stroke="#8e8e90" stroke-width="0.7"/>
<line x1="1175" y1="437" x2="1175" y2="463.6" stroke="#ecece8" stroke-width="1.2"/>
<polygon points="1246.4,428 1250.8,428 1250.8,463.2 1249.4,467.1 1247.8,467.1 1246.4,463.2" fill="#c4c4be"/>
<line x1="1246.8" y1="428" x2="1246.8" y2="463.2" stroke="#77777a" stroke-width="0.8"/>
<line x1="1250.4" y1="428" x2="1250.4" y2="463.2" stroke="#8e8e90" stroke-width="0.7"/>
<line x1="1248.9" y1="428" x2="1248.9" y2="464.1" stroke="#ecece8" stroke-width="1.3"/>
<polygon points="1190.4,436 1194.6,436 1194.6,466.3 1193.2,470 1191.8,470 1190.4,466.3" fill="#c4c4be"/>
<line x1="1190.8" y1="436" x2="1190.8" y2="466.3" stroke="#77777a" stroke-width="0.8"/>
<line x1="1194.2" y1="436" x2="1194.2" y2="466.3" stroke="#8e8e90" stroke-width="0.7"/>
<line x1="1192.8" y1="436" x2="1192.8" y2="467.1" stroke="#ecece8" stroke-width="1.2"/>
<polygon points="1207,432 1211.4,432 1211.4,469.8 1210,473.8 1208.4,473.8 1207,469.8" fill="#c4c4be"/>
<line x1="1207.3" y1="432" x2="1207.3" y2="469.8" stroke="#77777a" stroke-width="0.8"/>
<line x1="1211.1" y1="432" x2="1211.1" y2="469.8" stroke="#8e8e90" stroke-width="0.7"/>
<line x1="1209.6" y1="432" x2="1209.6" y2="470.7" stroke="#ecece8" stroke-width="1.3"/>
<polygon points="1162.2,442 1166.6,442 1166.6,471.4 1165.2,475.3 1163.6,475.3 1162.2,471.4" fill="#c4c4be"/>
<line x1="1162.6" y1="442" x2="1162.6" y2="471.4" stroke="#77777a" stroke-width="0.8"/>
<line x1="1166.2" y1="442" x2="1166.2" y2="471.4" stroke="#8e8e90" stroke-width="0.7"/>
<line x1="1164.7" y1="442" x2="1164.7" y2="472.3" stroke="#ecece8" stroke-width="1.3"/>
<polygon points="1179.2,437 1183.6,437 1183.6,474.2 1182.2,478.2 1180.6,478.2 1179.2,474.2" fill="#c4c4be"/>
<line x1="1179.5" y1="437" x2="1179.5" y2="474.2" stroke="#77777a" stroke-width="0.8"/>
<line x1="1183.3" y1="437" x2="1183.3" y2="474.2" stroke="#8e8e90" stroke-width="0.7"/>
<line x1="1181.8" y1="437" x2="1181.8" y2="475.1" stroke="#ecece8" stroke-width="1.3"/>
<polygon points="1146.8,446 1151,446 1151,475.3 1149.6,479 1148.2,479 1146.8,475.3" fill="#c4c4be"/>
<line x1="1147.2" y1="446" x2="1147.2" y2="475.3" stroke="#77777a" stroke-width="0.8"/>
<line x1="1150.6" y1="446" x2="1150.6" y2="475.3" stroke="#8e8e90" stroke-width="0.7"/>
<line x1="1149.2" y1="446" x2="1149.2" y2="476.1" stroke="#ecece8" stroke-width="1.2"/>
<polygon points="1152.6,446 1157,446 1157,477.1 1155.6,481 1154,481 1152.6,477.1" fill="#c4c4be"/>
<line x1="1153" y1="446" x2="1153" y2="477.1" stroke="#77777a" stroke-width="0.8"/>
<line x1="1156.6" y1="446" x2="1156.6" y2="477.1" stroke="#8e8e90" stroke-width="0.7"/>
<line x1="1155.1" y1="446" x2="1155.1" y2="478" stroke="#ecece8" stroke-width="1.3"/>
<polygon points="783.5,277.1 862,268.6 862,287 783.5,292.5" fill="#f0875a"/>
<polygon points="884,263.6 968,254.1 968,282 886,284" fill="#fffde2"/>
<line x1="783.5" y1="275.1" x2="968" y2="254.1" stroke="#5a5a5a" stroke-width="0.9"/>
<polyline points="912,272.5 947,270 947,258" fill="none" stroke="#777" stroke-width="0.8"/>
<polygon points="783.5,293.5 968,284.5 968,428.5 783.5,398.7" fill="#f6d5c0"/>
<defs><pattern id="hatchp" width="2.400" height="2.400" patternUnits="userSpaceOnUse" patternTransform="rotate(45)"><rect width="2.400" height="2.400" fill="none"/><line x1="0" y1="0" x2="0" y2="2.400" stroke="#b8907e" stroke-width=".700"/></pattern></defs>
<polygon points="783.5,293.5 809,292.3 809,324.9 783.5,324.6" fill="#ef8759"/>
<rect x="785" y="297" width="10" height="27" fill="#8c8884"/>
<rect x="796" y="297" width="10" height="11" fill="#4a4a4e"/>
<rect x="796" y="311" width="10" height="10" fill="#4a4a4e"/>
<rect x="787" y="300" width="6" height="8" fill="#e88a60"/>
<rect x="787" y="311" width="6" height="9" fill="#e88a60"/>
<polygon points="811,292.2 832,291.2 832,325.2 811,324.9" fill="#f4d2ba"/>
<rect x="820.5" y="304" width="9.5" height="21" fill="#6e666a"/>
<rect x="823" y="306" width="5" height="17" fill="#948a8c"/>
<polygon points="834,291.1 857,289.9 857,325.5 834,325.2" fill="#f1d0ba"/>
<rect x="834" y="292" width="23" height="9" fill="#c9b8b0"/>
<rect x="838" y="303" width="6" height="21" fill="#fdfdf6"/>
<rect x="846.5" y="301" width="7" height="23" fill="#fffbe4"/>
<rect x="844.3" y="300" width="1.8" height="25" fill="#a2642a"/>
<rect x="852.6" y="299" width="1.8" height="26" fill="#a2642a"/>
<polygon points="860,289.8 874,289.1 874,325.8 860,325.6" fill="#f3d4c2"/>
<polygon points="875,289.1 926,286.6 926,326.4 875,325.8" fill="#fbdcc9"/>
<polygon points="899,290.6 925,289.4 925,318 899,318" fill="#aab6ba"/>
<rect x="903" y="289" width="2.2" height="28" fill="#c9d3d6"/>
<rect x="909" y="289" width="2.2" height="28" fill="#c9d3d6"/>
<rect x="915" y="289" width="2.2" height="28" fill="#c9d3d6"/>
<rect x="921" y="289" width="2.2" height="28" fill="#c9d3d6"/>
<rect x="896" y="288" width="4" height="30" fill="#fff9e0"/>
<rect x="877" y="304" width="4.5" height="21" fill="#fffbe0"/>
<rect x="886" y="313" width="37" height="3.4" fill="#24262c"/>
<rect x="886" y="316.4" width="37" height="6" fill="#8a8682" opacity="0.85"/>
<rect x="915" y="313" width="7" height="9" fill="#8e8e96"/>
<polygon points="928,286.5 966,284.6 966,327 928,326.5" fill="#c8b8b0"/>
<rect x="930" y="302.5" width="21" height="24.5" fill="#fffbe0"/>
<rect x="951" y="286" width="15" height="41" fill="#b7bfbe"/>
<rect x="957" y="290" width="5" height="30" fill="#9aa6a8"/>
<line x1="937" y1="303" x2="937" y2="327" stroke="#d8d4b8" stroke-width="0.7"/>
<line x1="944" y1="303" x2="944" y2="327" stroke="#d8d4b8" stroke-width="0.7"/>
<line x1="894.9" y1="300.6" x2="894.9" y2="314.6" stroke="#1a1aff" stroke-width="1.5"/>
<line x1="882.2" y1="314.7" x2="894.9" y2="314.7" stroke="#ff1010" stroke-width="1.6"/>
<line x1="894.9" y1="314.7" x2="903.4" y2="314.7" stroke="#10e010" stroke-width="1.6"/>
<polygon points="860,290.6 873.5,290 873.5,325.8 860,325.6" fill="url(#hatchp)" opacity="0.55"/>
<polygon points="811,293 820,292.5 820,325 811,324.9" fill="url(#hatchp)" opacity="0.55"/>
<polygon points="783.5,326.8 809,327.2 809,362.5 783.5,360.3" fill="#ee8558"/>
<rect x="785" y="332" width="9" height="26" fill="#8c8884"/>
<rect x="796" y="334" width="9" height="12" fill="#4a4a4e"/>
<rect x="796" y="349" width="9" height="6" fill="#4a4a4e"/>
<rect x="787" y="336" width="5" height="9" fill="#e88a60"/>
<rect x="786" y="353" width="22" height="9" fill="#2a2a30" opacity="0.9"/>
<polygon points="811,327.2 832,327.6 832,364.5 811,362.7" fill="#f5d3bc"/>
<rect x="821" y="343" width="8" height="20.5" fill="#7a7276"/>
<polygon points="834,327.6 858,328.1 858,366.7 834,364.6" fill="#f0ceb8"/>
<rect x="836" y="333" width="20" height="8" fill="#d8c8bc"/>
<rect x="828.5" y="343" width="12" height="22.5" fill="#0c0c82"/>
<rect x="842.8" y="343" width="1.8" height="23" fill="#b0661f"/>
<rect x="844.8" y="343" width="5" height="22" fill="#fffbe0"/>
<rect x="850" y="342" width="2" height="25" fill="#b0661f"/>
<rect x="852.2" y="343" width="4" height="23" fill="#fffbe0"/>
<polygon points="860,328.1 932,329.4 932,372.9 860,366.8" fill="#fbdcc9"/>
<rect x="880" y="335" width="9" height="30" fill="#fffbe4"/>
<polygon points="888,333.5 931,334.6 931,365.3 888,362.1" fill="#8e9ea6"/>
<rect x="891" y="337" width="2.4" height="29" fill="#c4ced2"/>
<rect x="897" y="337" width="2.4" height="29" fill="#c4ced2"/>
<rect x="904" y="337" width="2.4" height="29" fill="#c4ced2"/>
<rect x="910" y="337" width="2.4" height="29" fill="#c4ced2"/>
<rect x="917" y="337" width="2.4" height="29" fill="#c4ced2"/>
<rect x="923" y="337" width="2.4" height="29" fill="#c4ced2"/>
<rect x="893" y="360" width="14" height="3" fill="#7a5a3c"/>
<rect x="864" y="360" width="60" height="10" fill="#35353b" opacity="0.75"/>
<rect x="880" y="357.5" width="4" height="8" fill="#151518"/>
<rect x="884.6" y="358" width="3" height="7" fill="#151518"/>
<polygon points="934,329.4 966,330 966,375.8 934,373.1" fill="#fcd9c5"/>
<rect x="955" y="333" width="10" height="43" fill="#fffbe4"/>
<rect x="944" y="365" width="4" height="9" fill="#101014"/>
<rect x="950" y="367" width="12" height="2" fill="#8a8a8a"/>
<rect x="952" y="369" width="1.4" height="7" fill="#bbb"/>
<rect x="959" y="369" width="1.4" height="7" fill="#bbb"/>
<polygon points="860,328.1 880,328.5 880,368.5 860,366.8" fill="url(#hatchp)" opacity="0.55"/>
<polygon points="834,327.6 842,327.8 842,365.3 834,364.6" fill="url(#hatchp)" opacity="0.55"/>
<polygon points="783.5,364.3 809,366.7 809,402.8 783.5,398.7" fill="#ed8558"/>
<rect x="785" y="368" width="6" height="28" fill="#8a8684"/>
<rect x="801.8" y="366" width="6.4" height="33" fill="#d6eefc"/>
<rect x="805" y="380" width="3.4" height="19" fill="#9ab4e0"/>
<polygon points="811,366.9 833,368.9 833,406.7 811,403.1" fill="#f4d2bc"/>
<rect x="813.4" y="383.5" width="10" height="5.6" fill="#fdfdfd"/>
<polygon points="835,369.1 858,371.3 858,410.7 835,407" fill="#f2d0ba"/>
<rect x="849" y="385" width="8" height="7" fill="#8a8686"/>
<rect x="849" y="394" width="8" height="8" fill="#8a8686"/>
<rect x="836" y="390" width="13" height="3" fill="#3a342c" opacity="0.8"/>
<rect x="820" y="397" width="14" height="5" fill="#e4e0da"/>
<polygon points="860,371.5 896,374.8 896,416.9 860,411" fill="#f2d3c2"/>
<polygon points="896,374.8 966,381.3 966,428.2 896,416.9" fill="#9cabb0"/>
<rect x="899" y="384" width="2.6" height="36" fill="#c6d0d2"/>
<rect x="921" y="384" width="2.6" height="36" fill="#c6d0d2"/>
<rect x="927" y="384" width="2.6" height="36" fill="#c6d0d2"/>
<rect x="934" y="384" width="2.6" height="36" fill="#c6d0d2"/>
<rect x="940" y="384" width="2.6" height="36" fill="#c6d0d2"/>
<rect x="948" y="384" width="2.6" height="36" fill="#c6d0d2"/>
<rect x="955" y="384" width="2.6" height="36" fill="#c6d0d2"/>
<rect x="961" y="384" width="2.6" height="36" fill="#c6d0d2"/>
<rect x="905.5" y="384.5" width="5" height="24" fill="#e8d8b8"/>
<rect x="910" y="385" width="7.5" height="24" fill="#fffbe0"/>
<rect x="925" y="386" width="5" height="26" fill="#fffbe0"/>
<rect x="886.5" y="405" width="5" height="11" fill="#e8e8e8"/>
<rect x="895" y="407" width="5" height="9" fill="#e8e8e8"/>
<rect x="887" y="404" width="4.5" height="2" fill="#1a1a1a"/>
<rect x="903" y="409" width="62" height="9" fill="#1c1c22" opacity="0.85"/>
<polygon points="860,371.5 896,374.8 896,416.9 860,411" fill="url(#hatchp)" opacity="0.55"/>
<polygon points="811,377.7 833,380.2 833,406.7 811,403.1" fill="url(#hatchp)" opacity="0.55"/>
<polygon points="783.5,405.2 968,437.5 968,467.5 860,458.5 835,450 811,440 784,425.5" fill="#ececea"/>
<polygon points="813.6,432.5 843,431 858,444.5 836,448.8" fill="#2f7f86"/>
<polygon points="836,448.8 858,444.5 872,451 860,457" fill="#3a8a90"/>
<polygon points="846,413 856,414.5 856,441 846,438" fill="#ee9470"/>
<rect x="849" y="418" width="4" height="21" fill="#e8ece8"/>
<polygon points="817,412 824,413.5 824,425 817,423.5" fill="#5a5a5e"/>
<polygon points="874,422.8 968,439.5 968,449 874,441.5" fill="#e4ece8"/>
<line x1="890" y1="426.5" x2="890" y2="434.5" stroke="#c4ccc8" stroke-width="0.8"/>
<line x1="905" y1="429.2" x2="905" y2="437.2" stroke="#c4ccc8" stroke-width="0.8"/>
<line x1="921" y1="432.1" x2="921" y2="440.1" stroke="#c4ccc8" stroke-width="0.8"/>
<line x1="938" y1="435.1" x2="938" y2="443.1" stroke="#c4ccc8" stroke-width="0.8"/>
<line x1="953" y1="437.8" x2="953" y2="445.8" stroke="#c4ccc8" stroke-width="0.8"/>
<polygon points="862,438.5 968,449 968,463 900,456.5" fill="#b9bdd8"/>
<polygon points="783.5,398.7 968,428.5 968,437.5 783.5,405.2" fill="#cfd3ea"/>
<polygon points="783.5,405.2 820,411.6 820,418.6 783.5,412.2" fill="#c9cde6"/>
<polygon points="858,289.4 876,286.5 968,284.4 968,288 858,292.5" fill="#fbdcc9"/>
<polygon points="928,285.1 968,284.4 968,288 928,289.5" fill="#c8b8b0"/>
<polygon points="783.5,291.6 860,286.3 876,283.3 968,281.2 968,284.6 876,286.7 860,289.7 783.5,295" fill="#cfd6da"/>
<polygon points="783.5,324.6 968,327 968,330 783.5,326.8" fill="#c9c2c4"/>
<line x1="783.5" y1="325.3" x2="968" y2="328" stroke="#8a5a48" stroke-width="0.8"/>
<polygon points="783.5,360.3 968,376 968,381.5 783.5,364.3" fill="#b9c0de"/>
<polyline points="783.5,291.6 860,286.3 876,283.3 968,281.2" fill="none" stroke="#0c0c82" stroke-width="1" stroke-dasharray="6 5"/>
<polyline points="783.5,295 860,289.7 876,286.7 968,284.6" fill="none" stroke="#0c0c82" stroke-width="1" stroke-dasharray="4 6"/>
<line x1="783.5" y1="326.8" x2="968" y2="330" stroke="#0c0c82" stroke-width="1" stroke-dasharray="5 6"/>
<line x1="783.5" y1="360.3" x2="968" y2="376" stroke="#0c0c82" stroke-width="1.2" stroke-dasharray="6 3"/>
<line x1="783.5" y1="364.3" x2="968" y2="381.5" stroke="#0c0c82" stroke-width="1.2" stroke-dasharray="5 3"/>
<line x1="783.5" y1="398.7" x2="968" y2="428.5" stroke="#0c0c82" stroke-width="1.3" stroke-dasharray="6 3"/>
<line x1="783.5" y1="405.2" x2="968" y2="437.5" stroke="#0c0c82" stroke-width="1.4" stroke-dasharray="6 3"/>
<polyline points="784,425.5 811,440 835,450 860,458.5 968,467.5" fill="none" stroke="#0c0c82" stroke-width="1.6"/>
<line x1="862" y1="438.8" x2="968" y2="461" stroke="#0c0c82" stroke-width="1.2" stroke-dasharray="6 3"/>
<line x1="784.2" y1="277.5" x2="784.6" y2="426" stroke="#0c0c82" stroke-width="2.6"/>
<line x1="809.9" y1="287.4" x2="810.6" y2="440" stroke="#0c0c82" stroke-width="3"/>
<line x1="832.8" y1="291.1" x2="834.2" y2="451" stroke="#0c0c82" stroke-width="3"/>
<line x1="858" y1="289.9" x2="859" y2="459" stroke="#0c0c82" stroke-width="3.6"/>
<line x1="874" y1="289.1" x2="874" y2="325.8" stroke="#0c0c82" stroke-width="1.6"/>
<line x1="926.3" y1="283.4" x2="927.1" y2="326.5" stroke="#0c0c82" stroke-width="2.6"/>
<line x1="932.4" y1="329.4" x2="933.2" y2="373" stroke="#0c0c82" stroke-width="2.8"/>
<line x1="874.6" y1="372.8" x2="874.6" y2="416.8" stroke="#0c0c82" stroke-width="2.4"/>
<line x1="800.8" y1="366" x2="800.8" y2="401.4" stroke="#0c0c82" stroke-width="2.2"/>
<line x1="795.5" y1="400.6" x2="795.5" y2="431" stroke="#0c0c82" stroke-width="2.2"/>
<line x1="966.3" y1="256" x2="967.2" y2="468" stroke="#0c0c82" stroke-width="2.2"/>
<line x1="970.6" y1="262" x2="971" y2="470" stroke="#0c0c82" stroke-width="2"/>
<line x1="809.6" y1="264.5" x2="809.6" y2="291" stroke="#1a1a70" stroke-width="1.2"/>
<rect x="807.5" y="269.5" width="5" height="2.6" fill="#e8e8e8"/>
<polygon points="1220.8,278.4 1265.1,275.9 1265.1,291.7 1220.8,289.4" fill="#e3764a"/>
<polygon points="1174,281 1180,281 1180,288 1174,288" fill="#e3764a"/>
<line x1="1221.8" y1="275.9" x2="1267" y2="273.4" stroke="#6a6a6a" stroke-width="0.8"/>
<polyline points="1221,279 1243,277.6 1243,284.5 1222,285.8" fill="none" stroke="#8a5a40" stroke-width="0.7"/>
<polygon points="1170,291 1265.3,294 1261.6,402 1164.7,405" fill="#fba88a"/>
<polygon points="1173,292 1211,292.6 1211,324.9 1173,325" fill="#f7c4ac"/>
<rect x="1173" y="293" width="30" height="6" fill="#fbd2bc"/>
<rect x="1174" y="304" width="13" height="10" fill="#4e4e52"/>
<rect x="1173" y="317" width="6" height="8" fill="#ececec"/>
<rect x="1190" y="296" width="6.5" height="29" fill="#dcdcd8"/>
<rect x="1197" y="296" width="4" height="29" fill="#f4f4f0"/>
<rect x="1202" y="303" width="8" height="21" fill="#b8a29c"/>
<polygon points="1213,292.6 1228,292.9 1228,324.9 1213,324.9" fill="#f59c7c"/>
<rect x="1220" y="304" width="7" height="20" fill="#68747a"/>
<polygon points="1230,292.9 1264,293.4 1264,324.9 1230,324.9" fill="#e8875f"/>
<rect x="1231" y="296" width="18" height="6" fill="#26262a"/>
<rect x="1231" y="303" width="19" height="19" fill="#7a868c"/>
<rect x="1234" y="306" width="5" height="14" fill="#4a5054"/>
<rect x="1242" y="306" width="5" height="14" fill="#4a5054"/>
<rect x="1249.5" y="296" width="6" height="30" fill="#f08a60"/>
<rect x="1256" y="303" width="7" height="14" fill="#78848a"/>
<rect x="1231" y="314" width="8" height="8" fill="#111"/>
<rect x="1240" y="315" width="4" height="9" fill="#cfcfcf"/>
<polygon points="1170,328.5 1197,328.4 1197,362.9 1170,363.5" fill="#fca98b"/>
<rect x="1173" y="332" width="18" height="1.4" fill="#a08070"/>
<rect x="1170" y="348" width="9" height="15" fill="#0e0e86"/>
<rect x="1178" y="358" width="14" height="5" fill="#e8e8f0"/>
<rect x="1180" y="349" width="14" height="1.6" fill="#9a8a70"/>
<polygon points="1199,328.4 1225,328.3 1225,362.4 1199,362.9" fill="#f6a686"/>
<rect x="1201" y="330" width="21" height="3" fill="#d8d8d4"/>
<ellipse cx="1206.500" cy="344" rx="7" ry="13.500" fill="#1f5a30"/><ellipse cx="1204.500" cy="338" rx="3.500" ry="5" fill="#7a4a20"/><ellipse cx="1209.500" cy="352" rx="3" ry="4" fill="#2a3a8a"/>
<rect x="1205" y="357" width="2.6" height="7" fill="#8a4a14"/>
<polygon points="1228,328.3 1262,328.2 1262,361.6 1228,362.3" fill="#ee8e68"/>
<rect x="1229" y="333" width="13" height="28" fill="#78848a"/>
<rect x="1243" y="333" width="5" height="29" fill="#f09070"/>
<rect x="1249" y="333" width="8" height="20" fill="#8a9498"/>
<rect x="1232" y="340" width="6" height="6" fill="#4a5054"/>
<rect x="1251" y="334" width="4" height="4" fill="#4a5054"/>
<rect x="1229" y="352" width="28" height="5" fill="#141418" opacity="0.85"/>
<rect x="1229" y="356" width="28" height="7" fill="#9a9aa0"/>
<rect x="1231" y="357" width="4" height="6" fill="#1010a0"/>
<rect x="1238" y="357" width="5" height="6" fill="#1010a0"/>
<rect x="1249" y="357" width="5" height="6" fill="#1010a0"/>
<rect x="1261.3" y="356" width="2" height="8" fill="#f4f4f4"/>
<polygon points="1168,366.5 1222,365.4 1222,400 1168,402.1" fill="#f9a88a"/>
<rect x="1181" y="377" width="6" height="17" fill="#8a969a"/>
<rect x="1197" y="368" width="14" height="3.4" fill="#c8c8c8"/>
<rect x="1184" y="393" width="30" height="5" fill="#d8c8b8"/>
<rect x="1186" y="391" width="5" height="3" fill="#b89a78"/>
<rect x="1196" y="391" width="5" height="3" fill="#b89a78"/>
<polygon points="1224,365.3 1261,364.5 1261,398.4 1224,399.9" fill="#ee8c66"/>
<rect x="1229" y="371" width="16" height="22" fill="#7c888e"/>
<rect x="1231" y="374" width="5" height="16" fill="#4a5054"/>
<rect x="1238" y="374" width="5" height="16" fill="#4a5054"/>
<rect x="1228" y="393" width="26" height="5" fill="#19191f"/>
<rect x="1226" y="397" width="30" height="5" fill="#0e0e90" opacity="0.8"/>
<polygon points="1165,403 1260,400 1260,427.5 1165,441" fill="#e6ecea"/>
<polygon points="1165,407 1260,403 1260,417 1165,424" fill="#dfe8e6"/>
<polygon points="1165,410 1260,406 1260,409.5 1165,414" fill="#f2f5f3"/>
<polygon points="1165,424 1260,417 1260,421.5 1165,431" fill="#c3c7e0"/>
<polygon points="1165,435 1260,423.5 1260,425.5 1165,438" fill="#8ec4cc"/>
<line x1="1178" y1="407.5" x2="1178" y2="422" stroke="#bccac8" stroke-width="0.8"/>
<line x1="1206" y1="406.3" x2="1206" y2="420" stroke="#bccac8" stroke-width="0.8"/>
<line x1="1236" y1="405" x2="1236" y2="417.8" stroke="#bccac8" stroke-width="0.8"/>
<line x1="1248" y1="404.5" x2="1248" y2="416.9" stroke="#bccac8" stroke-width="0.8"/>
<polygon points="1170.1,288.2 1265.4,291.2 1265.3,294.2 1170,291.2" fill="#d3dada"/>
<polygon points="1169,325.5 1263,325.3 1263,327.7 1169,328" fill="#c4b6b8"/>
<polygon points="1167,363.6 1262,361.6 1262,364.5 1167,366.6" fill="#c6c6d6"/>
<polygon points="1165,403 1260,400 1260,403 1165,407" fill="#c9cde8"/>
<line x1="1172" y1="288.4" x2="1266" y2="290" stroke="#0c0c82" stroke-width="1" stroke-dasharray="5 6"/>
<line x1="1172" y1="291.6" x2="1266" y2="293" stroke="#0c0c82" stroke-width="1" stroke-dasharray="4 5"/>
<line x1="1166" y1="328" x2="1263" y2="327.7" stroke="#0c0c82" stroke-width="1" stroke-dasharray="5 4"/>
<line x1="1166" y1="366.1" x2="1263" y2="364" stroke="#0c0c82" stroke-width="1.1" stroke-dasharray="5 3"/>
<line x1="1165" y1="403" x2="1260" y2="400" stroke="#0c0c82" stroke-width="1.2" stroke-dasharray="6 3"/>
<line x1="1165" y1="407" x2="1260" y2="403" stroke="#0c0c82" stroke-width="1.2" stroke-dasharray="5 3"/>
<line x1="1165" y1="424" x2="1260" y2="417" stroke="#0c0c82" stroke-width="1.1" stroke-dasharray="6 3"/>
<line x1="1163.5" y1="440.8" x2="1260.5" y2="427.5" stroke="#0c0c82" stroke-width="1.8"/>
<line x1="1171.6" y1="270" x2="1168" y2="366" stroke="#0c0c82" stroke-width="2.6"/>
<line x1="1168" y1="366" x2="1164.5" y2="441" stroke="#0c0c82" stroke-width="3.2"/>
<line x1="1266.6" y1="276" x2="1262.4" y2="366" stroke="#0c0c82" stroke-width="2.4"/>
<line x1="1262.4" y1="366" x2="1260.6" y2="428" stroke="#0c0c82" stroke-width="2.6"/>
<line x1="1211.5" y1="292" x2="1211" y2="326" stroke="#0c0c82" stroke-width="2.4"/>
<line x1="1228.6" y1="292" x2="1228" y2="326" stroke="#0c0c82" stroke-width="2.6"/>
<line x1="1197.4" y1="329" x2="1197" y2="365" stroke="#0c0c82" stroke-width="2.4"/>
<line x1="1225.8" y1="329" x2="1225.4" y2="366" stroke="#0c0c82" stroke-width="2.8"/>
<line x1="1222.6" y1="367" x2="1222.4" y2="404" stroke="#0c0c82" stroke-width="2.4"/>
<line x1="1193" y1="406" x2="1193" y2="436.5" stroke="#0c0c82" stroke-width="2.6"/>
<line x1="1223" y1="405" x2="1223" y2="432.5" stroke="#0c0c82" stroke-width="2.6"/>
<line x1="1257.5" y1="402" x2="1257.2" y2="428" stroke="#0c0c82" stroke-width="2.4"/>
<line x1="1176.5" y1="300" x2="1176" y2="360" stroke="#0c0c82" stroke-width="1" opacity="0.7"/>
<polygon points="752.7,393.3 764,394.6 764,421 752.7,418.6" fill="#8e8e94" stroke="#0c0c82" stroke-width="1"/>
<polygon points="764,394.6 784,392.4 784,421 764,421" fill="#7e7e86" stroke="#0c0c82" stroke-width="0.8"/>
<polygon points="764,394.6 784,392.4 784,395.6 765,397.6" fill="#1f5a2a"/>
<polygon points="752.7,393.3 771,391.6 784,392.4 764,394.6" fill="#6e6e74"/>
<polygon points="1262.5,403 1302.5,404.2 1301,425 1286.5,426.6 1262.5,419" fill="#5c5c62" stroke="#0c0c82" stroke-width="0.9"/>
<polygon points="1286.5,405 1302.5,404.2 1301,425 1286.5,426.6" fill="#66666c" stroke="#0c0c82" stroke-width="0.9"/>
<polygon points="1262.5,402.6 1290,401.4 1302.5,404.2 1275,405.6" fill="#2a5030"/>
<g>
<polygon points="859.5,287 859.5,266 862,263 877.5,262.5 878,266 894,264 901,263.5 901,273 893,275 886,283 886,286" fill="#d9d9d5"/>
<rect x="870.3" y="256.5" width="4" height="5.5" fill="#dcdcd8"/>
<rect x="871.5" y="257" width="1.6" height="5" fill="#f6f6f2"/>
<rect x="860" y="262" width="17.7" height="3.6" fill="#efefeb"/>
<rect x="862" y="258.5" width="6" height="3.5" fill="#b8b8b4"/>
<rect x="864" y="269" width="30" height="5.4" fill="#b4b4b0"/>
<rect x="866" y="270" width="26" height="1.4" fill="#6a6a70"/>
<rect x="864" y="269" width="30" height="1.2" fill="#e4e4e0"/>
<rect x="894" y="263.3" width="7" height="9.5" fill="#f4f4f0"/>
<rect x="894" y="263.3" width="1.6" height="9.5" fill="#c4c4c0"/>
<rect x="861.7" y="274.6" width="3.8" height="12" fill="#f6f6f2"/>
<rect x="866.5" y="275" width="4.5" height="11.5" fill="#e0e0dc"/>
<rect x="872" y="276" width="3" height="10" fill="#fafaf6"/>
<rect x="876" y="275.5" width="5" height="10" fill="#cfcfcb"/>
<rect x="881.5" y="278" width="4" height="7.5" fill="#f4f4f0"/>
<rect x="868" y="277" width="1.2" height="8" fill="#55555a"/>
<rect x="875" y="278" width="1" height="7" fill="#55555a"/>
<line x1="849.5" y1="275" x2="859" y2="265.5" stroke="#e8e8e4" stroke-width="2.6"/>
<line x1="852" y1="277" x2="861" y2="268" stroke="#bdbdb9" stroke-width="1.4"/>
<rect x="843.3" y="274.6" width="3" height="12.5" fill="#e2e2de"/>
<rect x="845.3" y="274.6" width="1" height="12.5" fill="#a8a8a4"/>
<ellipse cx="846.300" cy="272.200" rx="2" ry="3.200" fill="#e8e8e8" stroke="#0c0c82" stroke-width="1.500"/><ellipse cx="861.400" cy="271.300" rx="1.700" ry="2.700" fill="#e8e8e8" stroke="#0c0c82" stroke-width="1.400"/>
<polyline points="820.5,284 826,278.5 831,284 839,282.5" fill="none" stroke="#5e5e5a" stroke-width="1.8"/>
<line x1="826" y1="278.5" x2="826" y2="284.5" stroke="#5e5e5a" stroke-width="1.2"/>
<line x1="822" y1="285.5" x2="862" y2="283.8" stroke="#77736e" stroke-width="1"/>
<polygon points="1177,290 1177,272 1224,270 1224,290" fill="#d8d8d4"/>
<rect x="1178" y="271.5" width="46" height="3" fill="#ecece8"/>
<rect x="1181" y="276" width="2" height="13" fill="#f6f6f2"/>
<rect x="1185" y="276" width="2" height="13" fill="#f6f6f2"/>
<rect x="1189" y="276" width="2" height="13" fill="#f6f6f2"/>
<rect x="1205" y="276" width="2" height="13" fill="#f6f6f2"/>
<rect x="1209" y="276" width="2" height="13" fill="#f6f6f2"/>
<rect x="1213" y="276" width="2" height="13" fill="#f6f6f2"/>
<rect x="1217" y="276" width="2" height="13" fill="#f6f6f2"/>
<polygon points="1192,290 1192,266 1197.5,258.2 1203,266 1203,290" fill="#c9c9c6"/>
<rect x="1197.5" y="262" width="4" height="28" fill="#ececea"/>
<rect x="1193" y="268" width="4.5" height="10" fill="#9a9a98"/>
<rect x="1182" y="267" width="3" height="5" fill="#dcdcd8"/>
<rect x="1216" y="265" width="3" height="6" fill="#dcdcd8"/>
<rect x="1220" y="269.5" width="4" height="3.5" fill="#e8e8e4"/>
</g>
<line x1="825.6" y1="234.3" x2="825.6" y2="281" stroke="#5c5c5c" stroke-width="0.9"/>
<line x1="861.8" y1="227.5" x2="861.8" y2="259" stroke="#5c5c5c" stroke-width="0.9"/>
<line x1="896.5" y1="237.7" x2="896.5" y2="263" stroke="#5c5c5c" stroke-width="0.9"/>
<line x1="964.4" y1="243" x2="964.4" y2="254.5" stroke="#5c5c5c" stroke-width="0.9"/>
<line x1="1101" y1="247.3" x2="1101" y2="272.5" stroke="#5c5c5c" stroke-width="0.9"/>
<line x1="1208.8" y1="236" x2="1208.8" y2="266" stroke="#5c5c5c" stroke-width="0.9"/>
<line x1="1101" y1="272.5" x2="1101" y2="274" stroke="#bdbdbd" stroke-width="3"/>
<line x1="944.3" y1="154.3" x2="716.6" y2="229.5" stroke="#46a2c4" stroke-width="1"/>
<line x1="944.3" y1="154.3" x2="1315.1" y2="212.2" stroke="#46a2c4" stroke-width="1"/>
<line x1="716.6" y1="229.5" x2="722.5" y2="442.8" stroke="#46a2c4" stroke-width="1"/>
<line x1="1315.1" y1="212.2" x2="1298.4" y2="465.4" stroke="#46a2c4" stroke-width="1"/>
<line x1="941.6" y1="536.2" x2="722.5" y2="442.8" stroke="#46a2c4" stroke-width="1"/>
<line x1="941.6" y1="536.2" x2="1298.4" y2="465.4" stroke="#46a2c4" stroke-width="1"/>
<line x1="944.3" y1="154.3" x2="941.6" y2="536.2" stroke="#46a2c4" stroke-width="1.2" opacity="0.9"/>
<line x1="991" y1="221" x2="991" y2="127" stroke="#0000ff" stroke-width="2"/>
<polygon points="991,111.5 997.3,129.5 984.7,129.5" fill="#0000ff"/>
<line x1="985.3" y1="478" x2="985.3" y2="538" stroke="#0000ff" stroke-width="1.8"/>
<polygon points="985.3,553 979.7,536.3 990.9,536.3" fill="#0000ff"/>
<line x1="800" y1="342.6" x2="715" y2="344.6" stroke="#0000ff" stroke-width="1.8"/>
<polygon points="698,344.8 716.5,338.8 716.5,351" fill="#0000ff"/>
<line x1="1161" y1="345.8" x2="1248" y2="347.8" stroke="#0000ff" stroke-width="2.2"/>
<path d="M1270 348.600L1249 341Q1244.500 341.500 1244.500 348Q1244.500 354.800 1249 355.500Z" fill="#0000ff"/>
</svg>

<div id="rstrip" class="abs" style="left:1832px;top:0;width:2px;height:812px;background:#000;"></div>
<!-- top bar -->
<div id="topbar">
  <div id="logo"></div>
  <div class="vdiv" style="left:435px;width:2px;"></div>
  <div class="t" style="left:445px;top:8px;font-size:13px;color:#fff;letter-spacing:.15px;">Базовое пространство</div>
  <div class="t" style="left:990.600px;top:4px;font-size:18px;color:#ddd;letter-spacing:.3px;">Школа</div>
  <div class="vdiv" style="left:1604px;width:2px;"></div>
</div>

<!-- left sidebar -->
<div class="sb" style="top:37px"></div>
<div class="sb" style="top:87px"></div>
<div class="sb" style="top:137px"></div>
<div class="sb" style="top:187px"></div>
<div class="sb" style="top:237px"></div>
<div class="sb" style="top:287px"></div>
<div class="sb" style="top:337px"></div>
<div class="sb" style="top:387px"></div>
<div class="sb" style="top:437px"></div>
<div class="sb" style="top:487px"></div>
<div class="sb" style="top:537px"></div>
<div class="abs" style="left:61px;top:37px;width:32px;height:32px;background:#555;"></div>
<div class="abs" style="left:17px;top:148px;width:81px;height:26px;border-radius:4px;background:rgba(97,97,97,.9);opacity:.16;"><div class="t" style="left:14px;top:7px;font-size:12px;color:#fff;">Проверки</div></div>

<!-- help -->
<div class="abs" style="left:16px;top:779px;width:24px;height:24px;border-radius:12px;background:#555;"></div>
<div class="t" style="left:23px;top:783px;font-size:16px;font-weight:bold;color:#fff;">?</div>

<!-- right rail -->
<div id="rail">
  <div class="rdiv" style="top:92px"></div>
  <div class="rdiv" style="top:317px"></div>
  <div class="rdiv" style="top:366px"></div>
  <div class="rdiv" style="top:547px"></div>
  <div class="rdiv" style="top:640px"></div>
  <div class="ract" style="top:189px"></div>
  <div class="ract" style="top:556px"></div>
  <div class="ract" style="top:600px"></div>
</div>

<!-- section cube panel -->
<div id="pgap" class="abs" style="left:1795px;top:37px;width:1px;height:300px;background:#454545;"></div>
<div class="abs" style="left:1493px;top:337px;width:302px;height:4px;background:linear-gradient(#8e8e8e,#c8c8c8 35%,#6a6a6a 70%,#0a0a0a);"></div>
<div id="panel">
  <div class="t" style="left:10px;top:11px;font-size:16px;color:#ddd;">Куб сечений</div>
  <div id="ptool">
    <div class="t" style="left:200px;top:10px;font-size:12px;color:#3a95b3;letter-spacing:1.35px;">Добавить</div>
  </div>
  <div id="plist">
    <div class="li" style="top:9px">Уровень 1</div>
    <div class="li" style="top:39px;letter-spacing:-.2px">Фунд. стена Т.О.</div>
    <div class="li" style="top:69px">Этаж 03</div>
    <div class="li" style="top:99px">Этаж 2</div>
    <div class="li" style="top:129px">Этаж 4</div>
    <div class="li" style="left:9px;top:177px;font-style:italic;letter-spacing:1.400px;color:#4a4a4a;">СОХРАНЕННЫЕ СЕЧЕНИЯ</div>
    <div id="selrow"></div>
    <div class="li" style="top:208px;letter-spacing:-.05px">Куб сечений 10.06.2025, 11:46:05</div>
  </div>
  <div id="pscroll"></div>
  <div id="pthumb"></div>
</div>

<!-- UI icon overlay (page coordinates) -->
<svg id="ui" style="left:0;top:0" width="1834" height="812" viewBox="0 0 1834 812" fill="none" stroke="none">
<!-- logo -->
<text x="8.900" y="17.400" font-family="Liberation Sans, sans-serif" font-size="12.300" fill="#1a1a1a" stroke="#1a1a1a" stroke-width=".450" textLength="41" lengthAdjust="spacingAndGlyphs">BiMiT</text>
<rect x="37.500" y="7.600" width="3" height="2.700" fill="#fff"/>
<rect x="37.900" y="8.100" width="2.100" height="1.900" fill="#ff0000"/>
<!-- ===== top bar icons ===== -->
<g stroke="#e4e4e4" stroke-width="2" fill="none">
  <rect x="342" y="8" width="18" height="12" rx="1.5"/>
  <path d="M348 7.5V5.2a1 1 0 0 1 1-1h4a1 1 0 0 1 1 1V7.500"/>
  <path d="M342 13.300H360" stroke-width="1.800"/>
  <path d="M351 13v2.200" stroke-width="3"/>
</g>
<g>
  <circle cx="384.900" cy="7.900" r="2.400" stroke="#e4e4e4" stroke-width="1.700"/>
  <circle cx="377" cy="12.100" r="2.200" fill="#e4e4e4"/>
  <circle cx="393" cy="12.100" r="2.200" fill="#e4e4e4"/>
  <path d="M379.800 20.200L381.700 14.600Q382.200 13.200 383.600 13.200H386.300Q387.700 13.200 388.200 14.600L390.100 20.200Z" stroke="#e4e4e4" stroke-width="1.800" stroke-linejoin="round"/>
  <path d="M373 21Q373.300 16.200 375.300 15.400H378.600Q377.200 18 377 21Z" fill="#e4e4e4"/>
  <path d="M397 21Q396.700 16.200 394.700 15.400H391.400Q392.800 18 393 21Z" fill="#e4e4e4"/>
</g>
<g stroke="#e4e4e4" stroke-width="1.800" fill="none">
  <path d="M424.300 11.800V7.700L417.600 4.800L410.900 7.700V12.300C410.900 16.500 413.800 20 417.800 21.300"/>
  <circle cx="424.300" cy="17.700" r="5.200" fill="#555"/>
  <circle cx="424.300" cy="16.100" r="1.100" fill="#e4e4e4" stroke="none"/>
  <path d="M421.800 19.900Q424.300 17.300 426.800 19.900Z" fill="#e4e4e4" stroke="none"/>
</g>
<path d="M620 10H630L625 15.300Z" fill="#fff"/>
<!-- settings outlined -->
<g transform="translate(1064 1)" fill="#e8e8e8">
<path d="M19.430 12.980c.04-.32.07-.64.07-.98 0-.34-.03-.66-.07-.98l2.110-1.650c.19-.15.240-.42.120-.64l-2-3.460c-.09-.16-.26-.25-.44-.25-.06 0-.12.010-.17.030l-2.490 1c-.52-.4-1.080-.73-1.690-.98l-.38-2.650C14.460 2.180 14.250 2 14 2h-4c-.25 0-.46.180-.49.420l-.38 2.650c-.61.250-1.170.59-1.690.98l-2.490-1c-.06-.02-.12-.03-.18-.03-.17 0-.34.090-.43.250l-2 3.460c-.13.220-.07.490.12.640l2.110 1.650c-.04.320-.07.650-.07.980 0 .33.030.66.070.98l-2.110 1.650c-.19.150-.24.420-.12.640l2 3.460c.09.160.26.250.44.250.06 0 .12-.01.170-.03l2.490-1c.52.400 1.080.73 1.690.98l.38 2.650c.03.240.24.420.49.420h4c.25 0 .46-.18.490-.42l.38-2.650c.61-.25 1.170-.59 1.690-.98l2.490 1c.06.020.12.030.18.030.17 0 .34-.09.430-.25l2-3.460c.12-.22.070-.49-.12-.64l-2.110-1.650zm-1.980-1.710c.04.310.05.520.05.730 0 .21-.02.430-.05.730l-.14 1.130.89.700 1.080.84-.7 1.210-1.270-.51-1.040-.42-.9.680c-.43.320-.84.560-1.250.73l-1.060.43-.16 1.130-.2 1.350h-1.400l-.19-1.350-.16-1.130-1.060-.43c-.43-.18-.83-.41-1.230-.71l-.91-.7-1.060.43-1.270.51-.7-1.210 1.080-.84.890-.7-.14-1.130c-.03-.31-.05-.54-.05-.74s.02-.43.050-.73l.14-1.130-.89-.7-1.080-.84.700-1.210 1.270.51 1.040.42.900-.68c.43-.32.840-.56 1.250-.73l1.060-.43.160-1.130.2-1.350h1.390l.19 1.350.16 1.130 1.060.43c.43.180.83.410 1.230.71l.91.700 1.060-.43 1.270-.51.700 1.210-1.070.85-.89.700.14 1.130zM12 8c-2.210 0-4 1.790-4 4s1.790 4 4 4 4-1.790 4-4-1.790-4-4-4zm0 6c-1.100 0-2-.9-2-2s.9-2 2-2 2 .9 2 2-.9 2-2 2z"/>
</g>
<!-- share arrow (mirrored reply) -->
<g transform="translate(1124 1) scale(-1.040 1.020)" fill="#e8e8e8">
<path d="M10 9V5l-7 7 7 7v-4.100c5 0 8.500 1.600 11 5.100-1-5-4-10-11-11z"/>
</g>
<!-- search -->
<g stroke="#e4e4e4" stroke-width="2.200" fill="none">
  <circle cx="1635.500" cy="10.400" r="5.500"/>
  <path d="M1639.600 14.600L1646.200 21.200"/>
</g>
<!-- list -->
<g fill="#e4e4e4">
  <circle cx="1698.400" cy="6.500" r="1.500"/><rect x="1701.300" y="5.500" width="14.600" height="2"/>
  <circle cx="1698.400" cy="12.500" r="1.500"/><rect x="1701.300" y="11.500" width="14.600" height="2"/>
  <circle cx="1698.400" cy="18.500" r="1.500"/><rect x="1701.300" y="17.500" width="14.600" height="2"/>
</g>
<!-- bell -->
<g transform="translate(1728 .700)" fill="#e0e0e0">
<path d="M12 22c1.100 0 2-.9 2-2h-4c0 1.100.89 2 2 2zm6-6v-5c0-3.070-1.640-5.640-4.500-6.320V4c0-.83-.67-1.500-1.500-1.500s-1.500.67-1.500 1.500v.680C7.630 5.360 6 7.920 6 11v5l-2 2v1h16v-1l-2-2z"/>
</g>
<!-- forward 10 -->
<g transform="translate(1761.700 1)" fill="#e0e0e0">
<path d="M18 13c0 3.310-2.690 6-6 6s-6-2.690-6-6 2.690-6 6-6v4l5-5-5-5v4c-4.420 0-8 3.580-8 8s3.580 8 8 8 8-3.580 8-8h-2z"/>
</g>
<text x="1770.300" y="16.800" font-family="Liberation Sans, sans-serif" font-weight="bold" font-size="5.500" fill="#e0e0e0">10</text>
<rect x="1779.800" y="14" width="2.300" height="1.800" fill="#e8ffff"/>
<circle cx="1781" cy="19.900" r="4" fill="#ff0a0a"/>
<!-- account box -->
<g transform="translate(1796 1)" fill="#e0e0e0">
<path d="M3 5v14c0 1.100.89 2 2 2h14c1.100 0 2-.9 2-2V5c0-1.100-.9-2-2-2H5c-1.110 0-2 .9-2 2zm12 4c0 1.660-1.340 3-3 3s-3-1.340-3-3 1.340-3 3-3 3 1.340 3 3zm-9 8c0-2 4-3.100 6-3.100s6 1.100 6 3.100v1H6v-1z"/>
</g>

<!-- ===== left sidebar icons (each group translated to its button origin) ===== -->
<g transform="translate(5 37)">
  <rect x="8" y="9" width="12" height="6" rx="3" fill="#e0e0e0"/>
  <path d="M19 12H22Q24 12 24 14V36H29M24 16H29M24 26H29" stroke="#e0e0e0" stroke-width="2"/>
  <rect x="31" y="14" width="9.200" height="4" rx="2" fill="#e0e0e0"/>
  <rect x="31" y="24" width="9.200" height="4" rx="2" fill="#e0e0e0"/>
  <rect x="31" y="34" width="9.200" height="4" rx="2" fill="#e0e0e0"/>
</g>
<g transform="translate(61 37)">
  <path d="M4.700 12V4.700H12M20 4.700H27.300V12M27.300 20V27.300H20M12 27.300H4.700V20" stroke="#e6e6e6" stroke-width="1.400"/>
  <path d="M16 9.200L21.900 12.600V19.400L16 22.800L10.100 19.400V12.600Z" fill="#e0e0e0"/>
</g>
<g transform="translate(5 87)" stroke="#e0e0e0" stroke-width="2.100" stroke-linecap="round" stroke-linejoin="round">
  <path d="M10.800 14.200C18.500 14.200 20.500 18.500 23.500 22.750C26.500 27 28.500 31.300 38.500 31.300"/>
  <path d="M10.800 31.300C18.500 31.300 20.500 27 23.500 22.750C26.500 18.500 28.500 14.200 38.500 14.200"/>
  <path d="M31 8.800Q34.500 12.300 39.300 14.200Q34 15.500 31 20.200"/>
  <path d="M31 25.800Q34.500 29.300 39.300 31.300Q34 32.600 31 37.300"/>
</g>
<g transform="translate(5 137)" stroke="#e0e0e0" stroke-width="2.600" stroke-linecap="round" stroke-linejoin="round">
  <path d="M30 13.700H16.200L26.300 23.100L16.200 32.500H30"/>
</g>
<g transform="translate(5 187)" stroke="#e0e0e0" stroke-width="2.600" stroke-linecap="round" stroke-linejoin="round">
  <path d="M25.800 14.300H12.200L22.300 23.600L12.200 32.900H25.800"/>
  <path d="M28.300 24H37.800M33 19.200V28.900" stroke-width="1.900" stroke-linecap="butt" stroke="#d4d4d4"/>
</g>
<g transform="translate(5 237)">
  <path d="M12.100 9.900Q24 8.300 35.800 10.600Q33.300 22 33.800 36.800H12.100Z" stroke="#e0e0e0" stroke-width="2.100" stroke-linejoin="round"/>
  <path d="M24.500 35.800L26 33.200H32.500V35.800Z" fill="#e0e0e0"/>
  <text x="15.600" y="26.700" font-family="Liberation Sans, sans-serif" font-size="11.500" fill="#e6e6e6" textLength="14.500" lengthAdjust="spacingAndGlyphs">2D</text>
</g>
<g transform="translate(5 287)" stroke="#e0e0e0" stroke-width="2" stroke-linecap="round" stroke-linejoin="round">
  <path d="M12.600 16.200C15 13.500 17 11 18.900 11C21 11 23 17.900 25.400 18C27.500 18 31 12 36.200 9"/>
  <path d="M12.200 24.200C13.500 23 14.500 22.200 15.600 22.300C17.500 22.500 19.500 28.400 21.600 28.500C23.500 28.500 28 24.800 35.500 24.100"/>
  <path d="M12 36H36" stroke-width="2.200" stroke-linecap="butt"/>
</g>
<g transform="translate(5 337)" stroke="#e0e0e0" stroke-width="2.100" stroke-linejoin="round">
  <path d="M14.500 14H20V12.300a3 3 0 0 1 6 0V14H31.500a2.500 2.500 0 0 1 2.500 2.500V22H35.700a3 3 0 0 1 0 6H34V33.500a2.500 2.500 0 0 1 -2.500 2.500H26V34.300a3 3 0 0 0 -6 0V36H14.500a2.500 2.500 0 0 1 -2.500 -2.500V28H13.700a3 3 0 0 0 0 -6H12V16.500a2.500 2.500 0 0 1 2.500 -2.500Z"/>
</g>
<g transform="translate(5 387)" stroke="#e0e0e0" stroke-width="2" stroke-linecap="butt">
  <circle cx="23.500" cy="16.500" r="5.400"/>
  <path d="M23 32.700H12.100C12.600 27 17.500 23.300 23.500 23.300C28.500 23.300 32.500 25.900 34.300 29.800"/>
  <path d="M27.600 32.300L32 38L39.300 29.600" stroke-width="3" stroke-linecap="round" stroke-linejoin="round"/>
</g>
<g transform="translate(5 437)" stroke="#e0e0e0" stroke-width="1.800" stroke-linecap="round" stroke-linejoin="round">
  <path d="M9.200 16Q9 14.400 10.800 14.300L18.400 13.900L21 17.700H30Q31.800 17.800 32.400 19.800L34.600 33.800H15.500Q13.700 33.800 13 31.800Z"/>
  <path d="M34.600 33.800L39 27.300Q39.300 26 37.800 25.900L21.500 26.300"/>
  <path d="M26 22.300L21.200 26.300L26 30.600"/>
</g>
<g transform="translate(5 487)" stroke="#e0e0e0" stroke-width="1.800" stroke-linecap="butt">
  <circle cx="18.500" cy="15.500" r="5.100"/>
  <path d="M27 29.500H8.800C9.300 24.500 13.500 21 18.500 21C21.200 21 23.500 22 25.200 23.900"/>
  <path d="M32.500 37.300C29.500 34 27.200 31 27.200 27.700A5.300 5.300 0 0 1 37.800 27.700C37.800 31 35.500 34 32.500 37.300Z" stroke-linejoin="round"/>
  <circle cx="32.500" cy="27.900" r="1.500" fill="#e0e0e0" stroke="none"/>
</g>
<g transform="translate(5 537)">
  <circle cx="24" cy="22" r="12.800" stroke="#e0e0e0" stroke-width="2.200"/>
  <path d="M14.900 21.500A9.300 9.300 0 0 1 33.100 21.500" stroke="#cfcfcf" stroke-width="1.200" stroke-dasharray="1.400 1.400"/>
  <path d="M25.700 15L26 26.500Q23.300 29 20.400 26.500Z" fill="#e0e0e0"/>
  <rect x="20.700" y="34.500" width="3" height="4" fill="#e0e0e0"/>
  <rect x="9" y="38" width="30" height="2.100" fill="#e6e6e6"/>
</g>

<!-- ===== panel icons ===== -->
<path d="M1768.700 48.700L1781.300 61.300M1781.300 48.700L1768.700 61.300" stroke="#e4e4e4" stroke-width="2"/>
<rect x="1503" y="82" width="13" height="12.800" fill="#3b94b1"/>
<path d="M1518 85.300V97" stroke="#3b94b1" stroke-width="1.900" stroke-dasharray="1.300 1.300"/>
<path d="M1507 96H1517" stroke="#3b94b1" stroke-width="1.900" stroke-dasharray="1.300 1.300"/>
<path d="M1533.800 84.400L1544.200 94.700M1544.200 84.400L1533.800 94.700" stroke="#2f8aa8" stroke-width="1.500"/>
<circle cx="1682" cy="88.700" r="7.400" stroke="#3b94b1" stroke-width="1.200"/>
<path d="M1678 88.700H1686M1682 84.700V92.700" stroke="#3b94b1" stroke-width="1.300"/>
<g transform="translate(1769 80) scale(.667)" fill="#555">
<path d="M19.140 12.940c.04-.3.060-.61.060-.94 0-.32-.02-.64-.07-.94l2.030-1.580c.18-.14.230-.41.120-.61l-1.920-3.320c-.12-.22-.37-.29-.59-.22l-2.390.96c-.5-.38-1.030-.7-1.620-.94l-.36-2.540c-.04-.24-.24-.41-.48-.41h-3.840c-.24 0-.43.170-.47.410l-.36 2.540c-.59.240-1.130.57-1.620.94l-2.390-.96c-.22-.08-.47 0-.59.220L2.740 8.870c-.12.210-.08.470.12.610l2.030 1.580c-.05.300-.09.630-.09.940s.02.640.07.940l-2.030 1.580c-.18.140-.23.410-.12.610l1.920 3.320c.12.220.37.290.59.220l2.390-.96c.5.380 1.030.7 1.620.94l.36 2.540c.05.240.24.410.48.410h3.840c.24 0 .44-.17.470-.41l.36-2.540c.59-.24 1.130-.56 1.620-.94l2.390.96c.22.080.47 0 .59-.22l1.920-3.320c.12-.22.070-.47-.12-.61l-2.010-1.580zM12 15.600c-1.980 0-3.600-1.620-3.600-3.600s1.620-3.600 3.600-3.600 3.600 1.620 3.600 3.600-1.620 3.600-3.600 3.600z"/>
</g>
<g transform="translate(1727 312) scale(.667)" fill="#2e2e2e">
<path d="M3 17.250V21h3.750L17.810 9.940l-3.750-3.750L3 17.250zM20.710 7.040c.39-.39.390-1.020 0-1.410l-2.340-2.340c-.39-.39-1.020-.39-1.410 0l-1.830 1.830 3.750 3.750 1.830-1.830z"/>
</g>
<path d="M1758.700 315.700L1767.500 324.400M1767.500 315.700L1758.700 324.400" stroke="#2e2e2e" stroke-width="1.400"/>
<!-- resize grip -->
<g>
  <path d="M1780.300 335.200L1785 330.500V335.200Z" fill="#fff"/>
  <path d="M1780 335.500L1794.300 321.600M1785 335.500L1794.300 326.400M1789.500 335.500L1794.300 330.800" stroke="#3a3a3a" stroke-width="1"/>
  <path d="M1782.600 335.500L1794.300 324M1787.300 335.500L1794.300 328.600M1791.800 335.500L1794.300 333" stroke="#8fd0e6" stroke-width=".900" opacity=".800"/>
</g>

<!-- ===== right rail icons ===== -->
<g stroke="#e0e0e0" stroke-width="1.400" stroke-linecap="round" fill="none">
  <path d="M1810.600 66.100H1808.400A5.400 5.400 0 0 1 1808.700 55.300A5.800 5.800 0 0 1 1820.100 55.300A5.400 5.400 0 0 1 1820.400 66.100H1818.600"/>
  <path d="M1814.300 55.200V72.200M1814.300 63.600L1809 59.800M1814.300 61L1817.300 58.600M1814.300 65.600L1819.100 62.600"/>
</g>
<g stroke="#e0e0e0" stroke-width="1.300" fill="none">
  <path d="M1824.400 99.800V92.500H1801.500V109.200H1809.300V112.400H1806.100"/>
  <path d="M1812 107V102.200H1817M1821 102.200H1826V107M1826 112V117H1821M1817 117H1812V112"/>
  <path d="M1818.900 104.900L1823.100 107.400V112.500L1818.900 115L1814.700 112.500V107.400Z" fill="#e0e0e0" stroke="none"/>
</g>
<g fill="#e4e4e4">
  <path d="M1800.800 148.900H1827.100V157.400H1800.800ZM1802.200 150.300V156H1825.700V150.300Z" fill-rule="evenodd"/>
  <rect x="1800.800" y="159" width="26.300" height="2"/>
  <rect x="1804.900" y="153" width="1.100" height="3.500"/><rect x="1809.900" y="153" width="1.100" height="3.500"/><rect x="1815.200" y="153" width="1.600" height="3.500"/><rect x="1821" y="153" width="1.100" height="3.500"/>
  <rect x="1807.400" y="155" width="1.300" height="1.500"/><rect x="1812.800" y="155" width="1.300" height="1.500"/><rect x="1818" y="155" width="1.300" height="1.500"/><rect x="1823.400" y="155" width="1.300" height="1.500"/>
</g>
<g>
  <path d="M1808.800 194.500H1827.500L1819.200 200.400H1800.400Z" stroke="#e0e0e0" stroke-width="1.200" fill="none"/>
  <path d="M1809.050 191.500L1818.900 183.900V203.600L1809.050 212Z" fill="#e0e0e0"/>
  <path d="M1809 199.200H1819" stroke="#555" stroke-width="1.100"/>
  <path d="M1800.400 200.400H1819.200L1820.900 199.200" stroke="#e0e0e0" stroke-width="1.200" fill="none"/>
</g>
<g stroke="#e0e0e0" stroke-width="1.200" fill="none">
  <path d="M1811 236.500L1816.800 231.600V247.200L1811 252.300Z" fill="#e0e0e0" stroke="none"/>
  <rect x="1802.600" y="236.600" width="15.800" height="15.700"/>
  <rect x="1809.500" y="231.500" width="16" height="15.600"/>
  <path d="M1802.600 236.600L1809.500 231.500M1818.400 236.600L1825.500 231.500M1802.600 252.300L1809.500 247.100M1818.400 252.300L1825.500 247.100"/>
</g>
<g>
  <path d="M1802 277.200H1825.800V275.600L1828 277.200V297H1802Z" fill="#e0e0e0"/>
  <path d="M1800.300 279.200L1804.200 275.200H1825.700V294.500H1800.300Z" fill="#555" stroke="#e4e4e4" stroke-width="1.200"/>
  <path d="M1800.300 279.200L1804.200 275.200V279.200Z" fill="#e4e4e4"/>
  <path d="M1812.500 275.500V294.500" stroke="#e4e4e4" stroke-width="1.200" stroke-dasharray="2.200 1"/>
  <path d="M1800.500 284.500H1825.500" stroke="#e4e4e4" stroke-width="1.200" stroke-dasharray="2.800 1.200"/>
  <path d="M1818.500 294.500V291.600H1825.500" stroke="#e4e4e4" stroke-width="1.100" fill="none"/>
</g>
<g transform="translate(1802 318)" fill="#e4e4e4">
<path d="M12 8c-2.210 0-4 1.790-4 4s1.790 4 4 4 4-1.790 4-4-1.790-4-4-4zm8.940 3c-.46-4.170-3.770-7.480-7.940-7.940V1h-2v2.060C6.830 3.520 3.520 6.830 3.060 11H1v2h2.060c.46 4.170 3.770 7.480 7.940 7.940V23h2v-2.060c4.170-.46 7.480-3.770 7.940-7.940H23v-2h-2.060zM12 19c-3.870 0-7-3.130-7-7s3.130-7 7-7 7 3.130 7 7-3.130 7-7 7z"/>
</g>
<g stroke="#e0e0e0" stroke-width="1.200">
  <path d="M1799.050 383L1829 366.100M1799.400 392.700L1828.900 376.100M1799.900 377.300L1818.900 388.400M1808.700 371L1827.800 381.600"/>
</g>
<text x="1798.900" y="375.200" font-family="Liberation Sans, sans-serif" font-weight="bold" font-size="5.600" fill="#e0e0e0">1</text>
<text x="1808.800" y="369" font-family="Liberation Sans, sans-serif" font-weight="bold" font-size="5.600" fill="#e0e0e0">2</text>
<g stroke="#f0f0f0" stroke-width="1.300" fill="none" stroke-dasharray="2 2" stroke-dashoffset="1">
  <rect x="1802.500" y="416.500" width="23" height="23"/>
  <rect x="1802.500" y="460.500" width="23" height="23"/>
  <rect x="1802.500" y="504.500" width="23" height="23"/>
  <path d="M1811.500 571.500H1802.500V548.500H1825.500V557.500"/>
</g>
<g stroke="#d8d8d8" stroke-width="1.200" fill="none" stroke-linejoin="round">
  <path d="M1814 421.100L1819.900 424.400V431.500L1814 434.800L1808.100 431.500V424.400Z"/>
  <path d="M1808.100 424.400L1814 427.700L1819.900 424.400M1814 427.700V434.800"/>
</g>
<g transform="translate(1806.200 463.900) scale(.667)" fill="#e0e0e0">
<path d="M12 4.500C7 4.500 2.730 7.610 1 12c1.730 4.390 6 7.500 11 7.500s9.270-3.110 11-7.500c-1.730-4.390-6-7.500-11-7.500zM12 17c-2.760 0-5-2.240-5-5s2.240-5 5-5 5 2.240 5 5-2.240 5-5 5zm0-8c-1.660 0-3 1.340-3 3s1.340 3 3 3 3-1.340 3-3-1.340-3-3-3z"/>
</g>
<g transform="translate(1806 507.600) scale(.667)" fill="#e0e0e0">
<path d="M12 7c2.760 0 5 2.240 5 5 0 .65-.13 1.260-.36 1.830l2.920 2.920c1.510-1.260 2.700-2.890 3.430-4.750-1.730-4.390-6-7.500-11-7.500-1.400 0-2.740.25-3.980.7l2.160 2.160C10.740 7.130 11.350 7 12 7zM2 4.270l2.280 2.280.46.460C3.080 8.300 1.780 10.020 1 12c1.730 4.390 6 7.500 11 7.500 1.550 0 3.030-.3 4.380-.84l.42.420L19.730 22 21 20.730 3.270 3 2 4.270zM7.530 9.800l1.550 1.550c-.05.210-.08.430-.08.650 0 1.660 1.340 3 3 3 .22 0 .44-.03.650-.08l1.550 1.550c-.67.330-1.410.53-2.200.53-2.760 0-5-2.240-5-5 0-.79.200-1.530.53-2.200zm4.310-.78l3.150 3.150.02-.16c0-1.660-1.340-3-3-3l-.17.010z"/>
</g>
<rect x="1812.300" y="558.300" width="15.500" height="15.500" fill="#dcdcdc" stroke="#ececec" stroke-width=".800"/>
<path d="M1816 561.700L1824.200 570M1824.200 561.700L1816 570" stroke="#444" stroke-width="1.200"/>
<g>
  <path d="M1802.400 599.800L1814 597.400L1825.200 600L1813.500 603.300Z" fill="#787878" stroke="#e0e0e0" stroke-width="1.400" stroke-linejoin="round"/>
  <path d="M1802.400 599.800L1813.500 603.300L1813.700 621L1803.400 613.100Z" fill="#e0e0e0" stroke="#e0e0e0" stroke-width="1.200" stroke-linejoin="round"/>
  <path d="M1813.500 603.300L1825.200 600L1823.800 613.600L1813.700 621" fill="none" stroke="#e0e0e0" stroke-width="1.400" stroke-linejoin="round"/>
</g>
<g stroke="#e0e0e0" fill="none">
  <ellipse cx="1814" cy="653.200" rx="10.900" ry="4.900" stroke-width="1.800"/>
  <ellipse cx="1814" cy="652.900" rx="4.400" ry="10.200" stroke-width="1.800"/>
  <path d="M1814.500 650V652.900L1811.300 656M1814.500 652.900L1817.700 656" stroke-width=".900"/>
</g>
<path d="M1798 804V808.500H1802.500Z" fill="#f0f0f0"/>

<!-- ===== axis gizmo ===== -->
<g>
  <path d="M111 678V661" stroke="#0000ff" stroke-width="2"/>
  <path d="M111 654.500L113.700 662.500H108.300Z" fill="#0000ff"/>
  <path d="M107.500 682L93 683.300" stroke="#ff0000" stroke-width="1.700"/>
  <path d="M85.300 684L93.600 681L94.100 685.600Z" fill="#ff0000"/>
  <path d="M114 682.300L122 683.700" stroke="#00ee00" stroke-width="1.700"/>
  <path d="M130 685.600L121.500 686.400L122.200 681.200Z" fill="#00ee00"/>
  <circle cx="111" cy="682.200" r="4" fill="#9a9a9a"/>
  <circle cx="110.300" cy="681.200" r="2.200" fill="#bdbdbd"/>
  <text x="111.600" y="648.600" font-family="Liberation Sans, sans-serif" font-size="10" fill="#0000ff" textLength="5" lengthAdjust="spacingAndGlyphs">Z</text>
  <text x="78" y="684.600" font-family="Liberation Sans, sans-serif" font-size="10" fill="#ff0000" textLength="5.800" lengthAdjust="spacingAndGlyphs">X</text>
  <text x="135" y="686" font-family="Liberation Sans, sans-serif" font-size="10" fill="#00dd00" textLength="7.300" lengthAdjust="spacingAndGlyphs">Y</text>
</g>
<!-- ===== red annotation arrow ===== -->
<defs><filter id="ablur" x="-20%" y="-20%" width="140%" height="140%"><feGaussianBlur stdDeviation="1.600"/></filter></defs>
<g filter="url(#ablur)" opacity=".320">
  <path d="M1373.500 461.500L1499 339.500" stroke="#303030" stroke-width="3"/>
  <path d="M1510.500 329.500L1495.500 334L1505.500 344.500Z" fill="#1a1a1a"/>
</g>
<g>
  <path d="M1369.700 457.100L1497 333" stroke="#c00004" stroke-width="2.300"/>
  <path d="M1506.400 324.400L1491.200 329.600L1500.800 340Z" fill="#c00004"/>
</g>
</svg>
</body>
</html>
